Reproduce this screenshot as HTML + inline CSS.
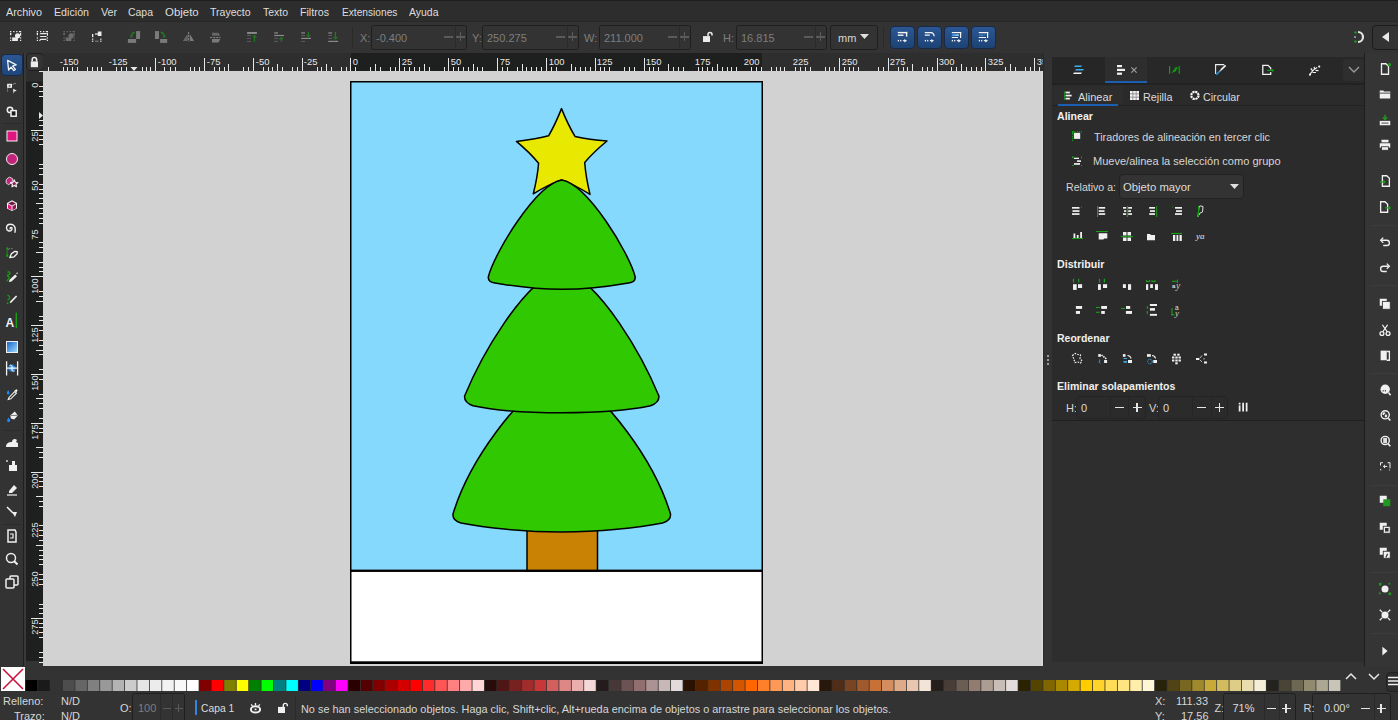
<!DOCTYPE html><html><head><meta charset="utf-8"><style>
html,body{margin:0;padding:0;}
body{width:1398px;height:720px;overflow:hidden;position:relative;background:#333333;font-family:"Liberation Sans",sans-serif;}
.b{position:absolute;}
.t{position:absolute;white-space:pre;line-height:1;font-family:"Liberation Sans",sans-serif;}
</style></head><body>
<div class="b" style="left:0px;top:0px;width:1398px;height:1px;background:#1e1e1e;"></div>
<div class="b" style="left:0px;top:1px;width:1398px;height:20px;background:#2d2d2d;"></div>
<div class="b" style="left:0px;top:21px;width:1398px;height:1px;background:#282828;"></div>
<div class="t" style="left:6.2px;top:6.59px;font-size:11px;color:#dedede;font-weight:normal;transform:scaleX(0.9814);transform-origin:0 0;">Archivo</div>
<div class="t" style="left:54.4px;top:6.59px;font-size:11px;color:#dedede;font-weight:normal;transform:scaleX(0.9701);transform-origin:0 0;">Edición</div>
<div class="t" style="left:101.1px;top:6.59px;font-size:11px;color:#dedede;font-weight:normal;transform:scaleX(0.9811);transform-origin:0 0;">Ver</div>
<div class="t" style="left:128px;top:6.59px;font-size:11px;color:#dedede;font-weight:normal;transform:scaleX(0.9507);transform-origin:0 0;">Capa</div>
<div class="t" style="left:165.2px;top:6.59px;font-size:11px;color:#dedede;font-weight:normal;transform:scaleX(1.0398);transform-origin:0 0;">Objeto</div>
<div class="t" style="left:210.2px;top:6.59px;font-size:11px;color:#dedede;font-weight:normal;transform:scaleX(0.9579);transform-origin:0 0;">Trayecto</div>
<div class="t" style="left:263px;top:6.59px;font-size:11px;color:#dedede;font-weight:normal;transform:scaleX(0.9509);transform-origin:0 0;">Texto</div>
<div class="t" style="left:300.2px;top:6.59px;font-size:11px;color:#dedede;font-weight:normal;transform:scaleX(0.9684);transform-origin:0 0;">Filtros</div>
<div class="t" style="left:341.7px;top:6.59px;font-size:11px;color:#dedede;font-weight:normal;transform:scaleX(0.9245);transform-origin:0 0;">Extensiones</div>
<div class="t" style="left:408.8px;top:6.59px;font-size:11px;color:#dedede;font-weight:normal;transform:scaleX(0.9518);transform-origin:0 0;">Ayuda</div>
<div class="b" style="left:352px;top:27px;width:1px;height:22px;background:#2a2a2a;"></div>
<div class="t" style="left:360px;top:32.69px;font-size:11px;color:#7e7e7e;font-weight:normal;">X:</div>
<div class="b" style="left:371px;top:25px;width:94px;height:23px;border:1px solid #1f1f1f;border-radius:2.5px;background:#333333"></div>
<div class="t" style="left:376px;top:32.69px;font-size:11px;color:#7e7e7e;font-weight:normal;">-0.400</div>
<div class="b" style="left:454.5px;top:26px;width:1px;height:23px;background:#2a2a2a;"></div>
<div class="b" style="left:444.0px;top:36.1px;width:9px;height:1.6px;background:#5a5a5a;"></div>
<div class="b" style="left:456.0px;top:36.1px;width:9px;height:1.6px;background:#5a5a5a;"></div>
<div class="b" style="left:459.8px;top:32.4px;width:1.4px;height:9px;background:#5a5a5a;"></div>
<div class="t" style="left:472px;top:32.69px;font-size:11px;color:#7e7e7e;font-weight:normal;">Y:</div>
<div class="b" style="left:482px;top:25px;width:95px;height:23px;border:1px solid #1f1f1f;border-radius:2.5px;background:#333333"></div>
<div class="t" style="left:487px;top:32.69px;font-size:11px;color:#7e7e7e;font-weight:normal;">250.275</div>
<div class="b" style="left:566.5px;top:26px;width:1px;height:23px;background:#2a2a2a;"></div>
<div class="b" style="left:556.0px;top:36.1px;width:9px;height:1.6px;background:#5a5a5a;"></div>
<div class="b" style="left:568.0px;top:36.1px;width:9px;height:1.6px;background:#5a5a5a;"></div>
<div class="b" style="left:571.8px;top:32.4px;width:1.4px;height:9px;background:#5a5a5a;"></div>
<div class="t" style="left:584px;top:32.69px;font-size:11px;color:#7e7e7e;font-weight:normal;">W:</div>
<div class="b" style="left:599px;top:25px;width:90px;height:23px;border:1px solid #1f1f1f;border-radius:2.5px;background:#333333"></div>
<div class="t" style="left:604px;top:32.69px;font-size:11px;color:#7e7e7e;font-weight:normal;">211.000</div>
<div class="b" style="left:678.5px;top:26px;width:1px;height:23px;background:#2a2a2a;"></div>
<div class="b" style="left:668.0px;top:36.1px;width:9px;height:1.6px;background:#5a5a5a;"></div>
<div class="b" style="left:680.0px;top:36.1px;width:9px;height:1.6px;background:#5a5a5a;"></div>
<div class="b" style="left:683.8px;top:32.4px;width:1.4px;height:9px;background:#5a5a5a;"></div>
<div class="t" style="left:723px;top:32.69px;font-size:11px;color:#7e7e7e;font-weight:normal;">H:</div>
<div class="b" style="left:736px;top:25px;width:89px;height:23px;border:1px solid #1f1f1f;border-radius:2.5px;background:#333333"></div>
<div class="t" style="left:741px;top:32.69px;font-size:11px;color:#7e7e7e;font-weight:normal;">16.815</div>
<div class="b" style="left:814.5px;top:26px;width:1px;height:23px;background:#2a2a2a;"></div>
<div class="b" style="left:804.0px;top:36.1px;width:9px;height:1.6px;background:#5a5a5a;"></div>
<div class="b" style="left:816.0px;top:36.1px;width:9px;height:1.6px;background:#5a5a5a;"></div>
<div class="b" style="left:819.8px;top:32.4px;width:1.4px;height:9px;background:#5a5a5a;"></div>
<div class="b" style="left:830px;top:25px;width:46px;height:23px;border:1px solid #1f1f1f;border-radius:2.5px;background:#333333"></div>
<div class="t" style="left:838px;top:32.69px;font-size:11px;color:#d6d6d6;font-weight:normal;">mm</div>
<svg class="b" style="left:860px;top:34px;" width="10" height="6" viewBox="0 0 10 6"><path d="M0 0h9L4.5 5z" fill="#e0e0e0"/></svg>
<div class="b" style="left:883px;top:27px;width:1px;height:22px;background:#2a2a2a;"></div>
<div class="b" style="left:890px;top:26px;width:23px;height:21px;border:1px solid #172a4a;border-radius:4px;background:linear-gradient(#2c5794,#1d4374)"></div>
<div class="b" style="left:917px;top:26px;width:23px;height:21px;border:1px solid #172a4a;border-radius:4px;background:linear-gradient(#2c5794,#1d4374)"></div>
<div class="b" style="left:944px;top:26px;width:23px;height:21px;border:1px solid #172a4a;border-radius:4px;background:linear-gradient(#2c5794,#1d4374)"></div>
<div class="b" style="left:971px;top:26px;width:23px;height:21px;border:1px solid #172a4a;border-radius:4px;background:linear-gradient(#2c5794,#1d4374)"></div>
<svg class="b" style="left:1350.0px;top:29.0px" width="16" height="16" viewBox="0 0 16 16"><path d="M8 3a5 5 0 0 1 0 10" stroke="#e6e6e6" stroke-width="2.2" fill="none"/><circle cx="5.5" cy="3.5" r="1.2" fill="#1f9a1f"/><circle cx="5.5" cy="12.5" r="1.2" fill="#1f9a1f"/><path d="M5 7v2" stroke="#e6e6e6" stroke-width="1"/></svg>
<div class="b" style="left:1372px;top:25px;width:30px;height:23px;border:1px solid #1c1c1c;border-radius:4px;background:#333"></div>
<svg class="b" style="left:1382px;top:32px;" width="8" height="10" viewBox="0 0 8 10"><path d="M7 0v10L0 5z" fill="#e8e8e8"/></svg>
<div class="b" style="left:0px;top:53px;width:23px;height:613px;background:#333333;"></div>
<div class="b" style="left:23px;top:53px;width:1px;height:613px;background:#1f1f1f;"></div>
<div class="b" style="left:24px;top:53px;width:2px;height:613px;background:#393939;"></div>
<div class="b" style="left:1px;top:54px;width:20px;height:20px;border:1px solid #172a4a;border-radius:4px;background:linear-gradient(#2c5794,#1f4679)"></div>
<div class="b" style="left:3px;top:123px;width:18px;height:1px;background:#2c2c2c;"></div>
<svg class="b" style="left:3.5px;top:127.5px" width="16" height="16" viewBox="0 0 16 16"><rect x="3" y="3" width="10" height="10" fill="#e0157f" stroke="#f0f0f0" stroke-width="1"/></svg>
<svg class="b" style="left:3.5px;top:151.0px" width="16" height="16" viewBox="0 0 16 16"><circle cx="8" cy="8" r="5.5" fill="#c2237a" stroke="#f0f0f0" stroke-width="1"/></svg>
<svg class="b" style="left:3.5px;top:339.0px" width="16" height="16" viewBox="0 0 16 16"><defs><linearGradient id="gg" x1="0" y1="0" x2="1" y2="1"><stop offset="0" stop-color="#0b63c7"/><stop offset="1" stop-color="#a9dcff"/></linearGradient></defs><rect x="2.5" y="2.5" width="11" height="11" fill="url(#gg)" stroke="#f0f0f0" stroke-width="1"/></svg>
<div class="b" style="left:3px;top:430px;width:18px;height:1px;background:#2c2c2c;"></div>
<svg class="b" style="left:3.5px;top:433.5px" width="16" height="16" viewBox="0 0 16 16"><path d="M2 13c0-4 3-5 6-5 0-3 3-4 5-2l-1 2 2 1v4z" fill="#f0f0f0"/></svg>
<svg class="b" style="left:3.5px;top:457.0px" width="16" height="16" viewBox="0 0 16 16"><rect x="5" y="8" width="8" height="6" fill="#f0f0f0"/><rect x="8" y="4" width="3" height="4" fill="#f0f0f0"/><path d="M2 3l2 2M4 3L2 5" stroke="#aaa" stroke-width="1"/></svg>
<svg class="b" style="left:3.5px;top:481.0px" width="16" height="16" viewBox="0 0 16 16"><path d="M5 10l5-6 3 3-5 5H5z" fill="#f0f0f0"/><path d="M3 14h10" stroke="#f0f0f0" stroke-width="1.2"/></svg>
<svg class="b" style="left:3.5px;top:503.5px" width="16" height="16" viewBox="0 0 16 16"><path d="M3 3l6 6" stroke="#f0f0f0" stroke-width="1.5"/><path d="M8 8l5 0-2 5z" fill="#f0f0f0"/></svg>
<div class="b" style="left:3px;top:524px;width:18px;height:1px;background:#2c2c2c;"></div>
<svg class="b" style="left:3.5px;top:527.5px" width="16" height="16" viewBox="0 0 16 16"><path d="M4 2h7l1 2v10H4z" stroke="#f0f0f0" stroke-width="1.5" fill="none"/><path d="M6 6h3v4H6" stroke="#f0f0f0" stroke-width="1.2" fill="none"/></svg>
<svg class="b" style="left:3.5px;top:551.0px" width="16" height="16" viewBox="0 0 16 16"><circle cx="7" cy="7" r="4.5" stroke="#f0f0f0" stroke-width="1.5" fill="none"/><path d="M10 10l3.5 3.5" stroke="#f0f0f0" stroke-width="2"/></svg>
<svg class="b" style="left:3.5px;top:574.0px" width="16" height="16" viewBox="0 0 16 16"><rect x="6" y="2" width="8" height="9" rx="1" stroke="#f0f0f0" stroke-width="1.5" fill="none"/><rect x="2" y="5" width="8" height="9" rx="1" stroke="#f0f0f0" stroke-width="1.5" fill="#333"/></svg>
<div class="b" style="left:26px;top:53px;width:17px;height:18px;background:#333333;"></div>
<div class="b" style="left:26px;top:53px;width:15.5px;height:15.5px;border:1px solid #1e1e1e;border-radius:4px;background:#333"></div>
<svg class="b" style="left:43px;top:53px;" width="1000" height="18" viewBox="0 0 1000 18"><rect x="0" y="0" width="1000" height="18" fill="#2e2e2e"/><rect x="308" y="0" width="411" height="18" fill="#1e1f1f"/><line x1="5.5" y1="14" x2="5.5" y2="18" stroke="#e8e8e8" stroke-width="1"/><line x1="20.5" y1="14" x2="20.5" y2="18" stroke="#e8e8e8" stroke-width="1"/><line x1="24.5" y1="14" x2="24.5" y2="18" stroke="#e8e8e8" stroke-width="1"/><line x1="29.5" y1="14" x2="29.5" y2="18" stroke="#e8e8e8" stroke-width="1"/><line x1="34.5" y1="14" x2="34.5" y2="18" stroke="#e8e8e8" stroke-width="1"/><line x1="44.5" y1="14" x2="44.5" y2="18" stroke="#e8e8e8" stroke-width="1"/><line x1="49.5" y1="14" x2="49.5" y2="18" stroke="#e8e8e8" stroke-width="1"/><line x1="54.5" y1="14" x2="54.5" y2="18" stroke="#e8e8e8" stroke-width="1"/><line x1="58.5" y1="14" x2="58.5" y2="18" stroke="#e8e8e8" stroke-width="1"/><line x1="73.5" y1="14" x2="73.5" y2="18" stroke="#e8e8e8" stroke-width="1"/><line x1="78.5" y1="14" x2="78.5" y2="18" stroke="#e8e8e8" stroke-width="1"/><line x1="83.5" y1="14" x2="83.5" y2="18" stroke="#e8e8e8" stroke-width="1"/><line x1="99.5" y1="14" x2="99.5" y2="18" stroke="#e8e8e8" stroke-width="1"/><line x1="103.5" y1="14" x2="103.5" y2="18" stroke="#e8e8e8" stroke-width="1"/><line x1="107.5" y1="14" x2="107.5" y2="18" stroke="#e8e8e8" stroke-width="1"/><line x1="112.5" y1="5" x2="112.5" y2="18" stroke="#e8e8e8" stroke-width="1"/><line x1="121.5" y1="14" x2="121.5" y2="18" stroke="#e8e8e8" stroke-width="1"/><line x1="127.5" y1="14" x2="127.5" y2="18" stroke="#e8e8e8" stroke-width="1"/><line x1="132.5" y1="14" x2="132.5" y2="18" stroke="#e8e8e8" stroke-width="1"/><line x1="147.5" y1="14" x2="147.5" y2="18" stroke="#e8e8e8" stroke-width="1"/><line x1="151.5" y1="14" x2="151.5" y2="18" stroke="#e8e8e8" stroke-width="1"/><line x1="156.5" y1="14" x2="156.5" y2="18" stroke="#e8e8e8" stroke-width="1"/><line x1="161.5" y1="5" x2="161.5" y2="18" stroke="#e8e8e8" stroke-width="1"/><line x1="171.5" y1="14" x2="171.5" y2="18" stroke="#e8e8e8" stroke-width="1"/><line x1="176.5" y1="14" x2="176.5" y2="18" stroke="#e8e8e8" stroke-width="1"/><line x1="181.5" y1="14" x2="181.5" y2="18" stroke="#e8e8e8" stroke-width="1"/><line x1="185.5" y1="11" x2="185.5" y2="18" stroke="#e8e8e8" stroke-width="1"/><line x1="200.5" y1="14" x2="200.5" y2="18" stroke="#e8e8e8" stroke-width="1"/><line x1="205.5" y1="14" x2="205.5" y2="18" stroke="#e8e8e8" stroke-width="1"/><line x1="210.5" y1="5" x2="210.5" y2="18" stroke="#e8e8e8" stroke-width="1"/><line x1="220.5" y1="14" x2="220.5" y2="18" stroke="#e8e8e8" stroke-width="1"/><line x1="225.5" y1="14" x2="225.5" y2="18" stroke="#e8e8e8" stroke-width="1"/><line x1="229.5" y1="14" x2="229.5" y2="18" stroke="#e8e8e8" stroke-width="1"/><line x1="234.5" y1="11" x2="234.5" y2="18" stroke="#e8e8e8" stroke-width="1"/><line x1="239.5" y1="14" x2="239.5" y2="18" stroke="#e8e8e8" stroke-width="1"/><line x1="249.5" y1="14" x2="249.5" y2="18" stroke="#e8e8e8" stroke-width="1"/><line x1="254.5" y1="14" x2="254.5" y2="18" stroke="#e8e8e8" stroke-width="1"/><line x1="259.5" y1="5" x2="259.5" y2="18" stroke="#e8e8e8" stroke-width="1"/><line x1="274.5" y1="14" x2="274.5" y2="18" stroke="#e8e8e8" stroke-width="1"/><line x1="278.5" y1="14" x2="278.5" y2="18" stroke="#e8e8e8" stroke-width="1"/><line x1="283.5" y1="11" x2="283.5" y2="18" stroke="#e8e8e8" stroke-width="1"/><line x1="288.5" y1="14" x2="288.5" y2="18" stroke="#e8e8e8" stroke-width="1"/><line x1="298.5" y1="14" x2="298.5" y2="18" stroke="#e8e8e8" stroke-width="1"/><line x1="303.5" y1="14" x2="303.5" y2="18" stroke="#e8e8e8" stroke-width="1"/><line x1="307.5" y1="5" x2="307.5" y2="18" stroke="#e8e8e8" stroke-width="1"/><line x1="312.5" y1="14" x2="312.5" y2="18" stroke="#e8e8e8" stroke-width="1"/><line x1="327.5" y1="14" x2="327.5" y2="18" stroke="#e8e8e8" stroke-width="1"/><line x1="332.5" y1="11" x2="332.5" y2="18" stroke="#e8e8e8" stroke-width="1"/><line x1="337.5" y1="14" x2="337.5" y2="18" stroke="#e8e8e8" stroke-width="1"/><line x1="347.5" y1="14" x2="347.5" y2="18" stroke="#e8e8e8" stroke-width="1"/><line x1="352.5" y1="14" x2="352.5" y2="18" stroke="#e8e8e8" stroke-width="1"/><line x1="356.5" y1="5" x2="356.5" y2="18" stroke="#e8e8e8" stroke-width="1"/><line x1="361.5" y1="14" x2="361.5" y2="18" stroke="#e8e8e8" stroke-width="1"/><line x1="366.5" y1="14" x2="366.5" y2="18" stroke="#e8e8e8" stroke-width="1"/><line x1="371.5" y1="14" x2="371.5" y2="18" stroke="#e8e8e8" stroke-width="1"/><line x1="376.5" y1="14" x2="376.5" y2="18" stroke="#e8e8e8" stroke-width="1"/><line x1="381.5" y1="11" x2="381.5" y2="18" stroke="#e8e8e8" stroke-width="1"/><line x1="386.5" y1="14" x2="386.5" y2="18" stroke="#e8e8e8" stroke-width="1"/><line x1="401.5" y1="14" x2="401.5" y2="18" stroke="#e8e8e8" stroke-width="1"/><line x1="405.5" y1="5" x2="405.5" y2="18" stroke="#e8e8e8" stroke-width="1"/><line x1="410.5" y1="14" x2="410.5" y2="18" stroke="#e8e8e8" stroke-width="1"/><line x1="415.5" y1="14" x2="415.5" y2="18" stroke="#e8e8e8" stroke-width="1"/><line x1="420.5" y1="14" x2="420.5" y2="18" stroke="#e8e8e8" stroke-width="1"/><line x1="425.5" y1="14" x2="425.5" y2="18" stroke="#e8e8e8" stroke-width="1"/><line x1="430.5" y1="11" x2="430.5" y2="18" stroke="#e8e8e8" stroke-width="1"/><line x1="434.5" y1="14" x2="434.5" y2="18" stroke="#e8e8e8" stroke-width="1"/><line x1="439.5" y1="14" x2="439.5" y2="18" stroke="#e8e8e8" stroke-width="1"/><line x1="454.5" y1="5" x2="454.5" y2="18" stroke="#e8e8e8" stroke-width="1"/><line x1="459.5" y1="14" x2="459.5" y2="18" stroke="#e8e8e8" stroke-width="1"/><line x1="464.5" y1="14" x2="464.5" y2="18" stroke="#e8e8e8" stroke-width="1"/><line x1="474.5" y1="14" x2="474.5" y2="18" stroke="#e8e8e8" stroke-width="1"/><line x1="479.5" y1="11" x2="479.5" y2="18" stroke="#e8e8e8" stroke-width="1"/><line x1="483.5" y1="14" x2="483.5" y2="18" stroke="#e8e8e8" stroke-width="1"/><line x1="488.5" y1="14" x2="488.5" y2="18" stroke="#e8e8e8" stroke-width="1"/><line x1="493.5" y1="14" x2="493.5" y2="18" stroke="#e8e8e8" stroke-width="1"/><line x1="498.5" y1="14" x2="498.5" y2="18" stroke="#e8e8e8" stroke-width="1"/><line x1="503.5" y1="5" x2="503.5" y2="18" stroke="#e8e8e8" stroke-width="1"/><line x1="508.5" y1="14" x2="508.5" y2="18" stroke="#e8e8e8" stroke-width="1"/><line x1="513.5" y1="14" x2="513.5" y2="18" stroke="#e8e8e8" stroke-width="1"/><line x1="528.5" y1="11" x2="528.5" y2="18" stroke="#e8e8e8" stroke-width="1"/><line x1="532.5" y1="14" x2="532.5" y2="18" stroke="#e8e8e8" stroke-width="1"/><line x1="537.5" y1="14" x2="537.5" y2="18" stroke="#e8e8e8" stroke-width="1"/><line x1="542.5" y1="14" x2="542.5" y2="18" stroke="#e8e8e8" stroke-width="1"/><line x1="547.5" y1="14" x2="547.5" y2="18" stroke="#e8e8e8" stroke-width="1"/><line x1="552.5" y1="5" x2="552.5" y2="18" stroke="#e8e8e8" stroke-width="1"/><line x1="557.5" y1="14" x2="557.5" y2="18" stroke="#e8e8e8" stroke-width="1"/><line x1="561.5" y1="14" x2="561.5" y2="18" stroke="#e8e8e8" stroke-width="1"/><line x1="566.5" y1="14" x2="566.5" y2="18" stroke="#e8e8e8" stroke-width="1"/><line x1="581.5" y1="14" x2="581.5" y2="18" stroke="#e8e8e8" stroke-width="1"/><line x1="586.5" y1="14" x2="586.5" y2="18" stroke="#e8e8e8" stroke-width="1"/><line x1="591.5" y1="14" x2="591.5" y2="18" stroke="#e8e8e8" stroke-width="1"/><line x1="601.5" y1="5" x2="601.5" y2="18" stroke="#e8e8e8" stroke-width="1"/><line x1="606.5" y1="14" x2="606.5" y2="18" stroke="#e8e8e8" stroke-width="1"/><line x1="610.5" y1="14" x2="610.5" y2="18" stroke="#e8e8e8" stroke-width="1"/><line x1="615.5" y1="14" x2="615.5" y2="18" stroke="#e8e8e8" stroke-width="1"/><line x1="625.5" y1="11" x2="625.5" y2="18" stroke="#e8e8e8" stroke-width="1"/><line x1="630.5" y1="14" x2="630.5" y2="18" stroke="#e8e8e8" stroke-width="1"/><line x1="635.5" y1="14" x2="635.5" y2="18" stroke="#e8e8e8" stroke-width="1"/><line x1="640.5" y1="14" x2="640.5" y2="18" stroke="#e8e8e8" stroke-width="1"/><line x1="655.5" y1="14" x2="655.5" y2="18" stroke="#e8e8e8" stroke-width="1"/><line x1="659.5" y1="14" x2="659.5" y2="18" stroke="#e8e8e8" stroke-width="1"/><line x1="664.5" y1="14" x2="664.5" y2="18" stroke="#e8e8e8" stroke-width="1"/><line x1="669.5" y1="14" x2="669.5" y2="18" stroke="#e8e8e8" stroke-width="1"/><line x1="674.5" y1="11" x2="674.5" y2="18" stroke="#e8e8e8" stroke-width="1"/><line x1="679.5" y1="14" x2="679.5" y2="18" stroke="#e8e8e8" stroke-width="1"/><line x1="684.5" y1="14" x2="684.5" y2="18" stroke="#e8e8e8" stroke-width="1"/><line x1="688.5" y1="14" x2="688.5" y2="18" stroke="#e8e8e8" stroke-width="1"/><line x1="693.5" y1="14" x2="693.5" y2="18" stroke="#e8e8e8" stroke-width="1"/><line x1="708.5" y1="14" x2="708.5" y2="18" stroke="#e8e8e8" stroke-width="1"/><line x1="713.5" y1="14" x2="713.5" y2="18" stroke="#e8e8e8" stroke-width="1"/><line x1="718.5" y1="14" x2="718.5" y2="18" stroke="#e8e8e8" stroke-width="1"/><line x1="728.5" y1="14" x2="728.5" y2="18" stroke="#e8e8e8" stroke-width="1"/><line x1="733.5" y1="14" x2="733.5" y2="18" stroke="#e8e8e8" stroke-width="1"/><line x1="737.5" y1="14" x2="737.5" y2="18" stroke="#e8e8e8" stroke-width="1"/><line x1="741.5" y1="14" x2="741.5" y2="18" stroke="#e8e8e8" stroke-width="1"/><line x1="752.5" y1="14" x2="752.5" y2="18" stroke="#e8e8e8" stroke-width="1"/><line x1="757.5" y1="14" x2="757.5" y2="18" stroke="#e8e8e8" stroke-width="1"/><line x1="762.5" y1="14" x2="762.5" y2="18" stroke="#e8e8e8" stroke-width="1"/><line x1="767.5" y1="14" x2="767.5" y2="18" stroke="#e8e8e8" stroke-width="1"/><line x1="782.5" y1="14" x2="782.5" y2="18" stroke="#e8e8e8" stroke-width="1"/><line x1="786.5" y1="14" x2="786.5" y2="18" stroke="#e8e8e8" stroke-width="1"/><line x1="791.5" y1="14" x2="791.5" y2="18" stroke="#e8e8e8" stroke-width="1"/><line x1="796.5" y1="5" x2="796.5" y2="18" stroke="#e8e8e8" stroke-width="1"/><line x1="801.5" y1="14" x2="801.5" y2="18" stroke="#e8e8e8" stroke-width="1"/><line x1="806.5" y1="14" x2="806.5" y2="18" stroke="#e8e8e8" stroke-width="1"/><line x1="810.5" y1="14" x2="810.5" y2="18" stroke="#e8e8e8" stroke-width="1"/><line x1="815.5" y1="14" x2="815.5" y2="18" stroke="#e8e8e8" stroke-width="1"/><line x1="835.5" y1="14" x2="835.5" y2="18" stroke="#e8e8e8" stroke-width="1"/><line x1="840.5" y1="14" x2="840.5" y2="18" stroke="#e8e8e8" stroke-width="1"/><line x1="845.5" y1="5" x2="845.5" y2="18" stroke="#e8e8e8" stroke-width="1"/><line x1="855.5" y1="14" x2="855.5" y2="18" stroke="#e8e8e8" stroke-width="1"/><line x1="860.5" y1="14" x2="860.5" y2="18" stroke="#e8e8e8" stroke-width="1"/><line x1="864.5" y1="14" x2="864.5" y2="18" stroke="#e8e8e8" stroke-width="1"/><line x1="869.5" y1="11" x2="869.5" y2="18" stroke="#e8e8e8" stroke-width="1"/><line x1="879.5" y1="14" x2="879.5" y2="18" stroke="#e8e8e8" stroke-width="1"/><line x1="884.5" y1="14" x2="884.5" y2="18" stroke="#e8e8e8" stroke-width="1"/><line x1="889.5" y1="14" x2="889.5" y2="18" stroke="#e8e8e8" stroke-width="1"/><line x1="894.5" y1="5" x2="894.5" y2="18" stroke="#e8e8e8" stroke-width="1"/><line x1="908.5" y1="14" x2="908.5" y2="18" stroke="#e8e8e8" stroke-width="1"/><line x1="913.5" y1="14" x2="913.5" y2="18" stroke="#e8e8e8" stroke-width="1"/><line x1="918.5" y1="11" x2="918.5" y2="18" stroke="#e8e8e8" stroke-width="1"/><line x1="923.5" y1="14" x2="923.5" y2="18" stroke="#e8e8e8" stroke-width="1"/><line x1="928.5" y1="14" x2="928.5" y2="18" stroke="#e8e8e8" stroke-width="1"/><line x1="933.5" y1="14" x2="933.5" y2="18" stroke="#e8e8e8" stroke-width="1"/><line x1="938.5" y1="14" x2="938.5" y2="18" stroke="#e8e8e8" stroke-width="1"/><line x1="942.5" y1="5" x2="942.5" y2="18" stroke="#e8e8e8" stroke-width="1"/><line x1="962.5" y1="14" x2="962.5" y2="18" stroke="#e8e8e8" stroke-width="1"/><line x1="967.5" y1="11" x2="967.5" y2="18" stroke="#e8e8e8" stroke-width="1"/><line x1="972.5" y1="14" x2="972.5" y2="18" stroke="#e8e8e8" stroke-width="1"/><line x1="982.5" y1="14" x2="982.5" y2="18" stroke="#e8e8e8" stroke-width="1"/><line x1="987.5" y1="14" x2="987.5" y2="18" stroke="#e8e8e8" stroke-width="1"/><line x1="991.5" y1="5" x2="991.5" y2="18" stroke="#e8e8e8" stroke-width="1"/><line x1="996.5" y1="14" x2="996.5" y2="18" stroke="#e8e8e8" stroke-width="1"/><text x="16.8" y="12.1" font-size="9.4" fill="#e8e8e8" font-family="Liberation Sans">-150</text><text x="65.8" y="12.1" font-size="9.4" fill="#e8e8e8" font-family="Liberation Sans">-125</text><text x="114.8" y="12.1" font-size="9.4" fill="#e8e8e8" font-family="Liberation Sans">-100</text><text x="163.8" y="12.1" font-size="9.4" fill="#e8e8e8" font-family="Liberation Sans">-75</text><text x="212.8" y="12.1" font-size="9.4" fill="#e8e8e8" font-family="Liberation Sans">-50</text><text x="260.8" y="12.1" font-size="9.4" fill="#e8e8e8" font-family="Liberation Sans">-25</text><text x="309.8" y="12.1" font-size="9.4" fill="#e8e8e8" font-family="Liberation Sans">0</text><text x="358.8" y="12.1" font-size="9.4" fill="#e8e8e8" font-family="Liberation Sans">25</text><text x="407.8" y="12.1" font-size="9.4" fill="#e8e8e8" font-family="Liberation Sans">50</text><text x="456.8" y="12.1" font-size="9.4" fill="#e8e8e8" font-family="Liberation Sans">75</text><text x="505.8" y="12.1" font-size="9.4" fill="#e8e8e8" font-family="Liberation Sans">100</text><text x="553.8" y="12.1" font-size="9.4" fill="#e8e8e8" font-family="Liberation Sans">125</text><text x="602.8" y="12.1" font-size="9.4" fill="#e8e8e8" font-family="Liberation Sans">150</text><text x="651.8" y="12.1" font-size="9.4" fill="#e8e8e8" font-family="Liberation Sans">175</text><text x="700.8" y="12.1" font-size="9.4" fill="#e8e8e8" font-family="Liberation Sans">200</text><text x="749.8" y="12.1" font-size="9.4" fill="#e8e8e8" font-family="Liberation Sans">225</text><text x="798.8" y="12.1" font-size="9.4" fill="#e8e8e8" font-family="Liberation Sans">250</text><text x="846.8" y="12.1" font-size="9.4" fill="#e8e8e8" font-family="Liberation Sans">275</text><text x="895.8" y="12.1" font-size="9.4" fill="#e8e8e8" font-family="Liberation Sans">300</text><text x="944.8" y="12.1" font-size="9.4" fill="#e8e8e8" font-family="Liberation Sans">325</text><text x="993.8" y="12.1" font-size="9.4" fill="#e8e8e8" font-family="Liberation Sans">350</text><path d="M87.5 14h7l-3.5 4z" fill="#e8e8e8"/></svg>
<svg class="b" style="left:26px;top:71px;" width="17" height="595" viewBox="0 0 17 595"><rect x="0" y="0" width="17" height="595" fill="#2e2e2e"/><rect x="0" y="10.5" width="17" height="579.5" fill="#1e1f1f"/><rect x="0" y="590" width="17" height="5" fill="#333333"/><line x1="13" y1="15.5" x2="17" y2="15.5" stroke="#e8e8e8" stroke-width="1"/><line x1="13" y1="20.5" x2="17" y2="20.5" stroke="#e8e8e8" stroke-width="1"/><line x1="13" y1="25.5" x2="17" y2="25.5" stroke="#e8e8e8" stroke-width="1"/><line x1="13" y1="49.5" x2="17" y2="49.5" stroke="#e8e8e8" stroke-width="1"/><line x1="13" y1="54.5" x2="17" y2="54.5" stroke="#e8e8e8" stroke-width="1"/><line x1="5" y1="59.5" x2="17" y2="59.5" stroke="#e8e8e8" stroke-width="1"/><line x1="13" y1="64.5" x2="17" y2="64.5" stroke="#e8e8e8" stroke-width="1"/><line x1="13" y1="68.5" x2="17" y2="68.5" stroke="#e8e8e8" stroke-width="1"/><line x1="13" y1="73.5" x2="17" y2="73.5" stroke="#e8e8e8" stroke-width="1"/><line x1="13" y1="93.5" x2="17" y2="93.5" stroke="#e8e8e8" stroke-width="1"/><line x1="13" y1="97.5" x2="17" y2="97.5" stroke="#e8e8e8" stroke-width="1"/><line x1="13" y1="103.5" x2="17" y2="103.5" stroke="#e8e8e8" stroke-width="1"/><line x1="13" y1="113.5" x2="17" y2="113.5" stroke="#e8e8e8" stroke-width="1"/><line x1="13" y1="118.5" x2="17" y2="118.5" stroke="#e8e8e8" stroke-width="1"/><line x1="13" y1="122.5" x2="17" y2="122.5" stroke="#e8e8e8" stroke-width="1"/><line x1="13" y1="127.5" x2="17" y2="127.5" stroke="#e8e8e8" stroke-width="1"/><line x1="10" y1="132.5" x2="17" y2="132.5" stroke="#e8e8e8" stroke-width="1"/><line x1="13" y1="137.5" x2="17" y2="137.5" stroke="#e8e8e8" stroke-width="1"/><line x1="13" y1="142.5" x2="17" y2="142.5" stroke="#e8e8e8" stroke-width="1"/><line x1="13" y1="147.5" x2="17" y2="147.5" stroke="#e8e8e8" stroke-width="1"/><line x1="13" y1="152.5" x2="17" y2="152.5" stroke="#e8e8e8" stroke-width="1"/><line x1="13" y1="171.5" x2="17" y2="171.5" stroke="#e8e8e8" stroke-width="1"/><line x1="13" y1="176.5" x2="17" y2="176.5" stroke="#e8e8e8" stroke-width="1"/><line x1="10" y1="181.5" x2="17" y2="181.5" stroke="#e8e8e8" stroke-width="1"/><line x1="13" y1="191.5" x2="17" y2="191.5" stroke="#e8e8e8" stroke-width="1"/><line x1="13" y1="196.5" x2="17" y2="196.5" stroke="#e8e8e8" stroke-width="1"/><line x1="13" y1="200.5" x2="17" y2="200.5" stroke="#e8e8e8" stroke-width="1"/><line x1="5" y1="205.5" x2="17" y2="205.5" stroke="#e8e8e8" stroke-width="1"/><line x1="13" y1="220.5" x2="17" y2="220.5" stroke="#e8e8e8" stroke-width="1"/><line x1="13" y1="225.5" x2="17" y2="225.5" stroke="#e8e8e8" stroke-width="1"/><line x1="10" y1="230.5" x2="17" y2="230.5" stroke="#e8e8e8" stroke-width="1"/><line x1="13" y1="245.5" x2="17" y2="245.5" stroke="#e8e8e8" stroke-width="1"/><line x1="13" y1="249.5" x2="17" y2="249.5" stroke="#e8e8e8" stroke-width="1"/><line x1="5" y1="254.5" x2="17" y2="254.5" stroke="#e8e8e8" stroke-width="1"/><line x1="13" y1="259.5" x2="17" y2="259.5" stroke="#e8e8e8" stroke-width="1"/><line x1="13" y1="269.5" x2="17" y2="269.5" stroke="#e8e8e8" stroke-width="1"/><line x1="13" y1="274.5" x2="17" y2="274.5" stroke="#e8e8e8" stroke-width="1"/><line x1="10" y1="279.5" x2="17" y2="279.5" stroke="#e8e8e8" stroke-width="1"/><line x1="13" y1="283.5" x2="17" y2="283.5" stroke="#e8e8e8" stroke-width="1"/><line x1="13" y1="298.5" x2="17" y2="298.5" stroke="#e8e8e8" stroke-width="1"/><line x1="5" y1="303.5" x2="17" y2="303.5" stroke="#e8e8e8" stroke-width="1"/><line x1="13" y1="308.5" x2="17" y2="308.5" stroke="#e8e8e8" stroke-width="1"/><line x1="13" y1="323.5" x2="17" y2="323.5" stroke="#e8e8e8" stroke-width="1"/><line x1="10" y1="327.5" x2="17" y2="327.5" stroke="#e8e8e8" stroke-width="1"/><line x1="13" y1="332.5" x2="17" y2="332.5" stroke="#e8e8e8" stroke-width="1"/><line x1="13" y1="337.5" x2="17" y2="337.5" stroke="#e8e8e8" stroke-width="1"/><line x1="13" y1="347.5" x2="17" y2="347.5" stroke="#e8e8e8" stroke-width="1"/><line x1="5" y1="352.5" x2="17" y2="352.5" stroke="#e8e8e8" stroke-width="1"/><line x1="13" y1="357.5" x2="17" y2="357.5" stroke="#e8e8e8" stroke-width="1"/><line x1="13" y1="361.5" x2="17" y2="361.5" stroke="#e8e8e8" stroke-width="1"/><line x1="10" y1="376.5" x2="17" y2="376.5" stroke="#e8e8e8" stroke-width="1"/><line x1="13" y1="381.5" x2="17" y2="381.5" stroke="#e8e8e8" stroke-width="1"/><line x1="13" y1="386.5" x2="17" y2="386.5" stroke="#e8e8e8" stroke-width="1"/><line x1="5" y1="401.5" x2="17" y2="401.5" stroke="#e8e8e8" stroke-width="1"/><line x1="13" y1="406.5" x2="17" y2="406.5" stroke="#e8e8e8" stroke-width="1"/><line x1="13" y1="410.5" x2="17" y2="410.5" stroke="#e8e8e8" stroke-width="1"/><line x1="13" y1="415.5" x2="17" y2="415.5" stroke="#e8e8e8" stroke-width="1"/><line x1="10" y1="425.5" x2="17" y2="425.5" stroke="#e8e8e8" stroke-width="1"/><line x1="13" y1="430.5" x2="17" y2="430.5" stroke="#e8e8e8" stroke-width="1"/><line x1="13" y1="435.5" x2="17" y2="435.5" stroke="#e8e8e8" stroke-width="1"/><line x1="13" y1="454.5" x2="17" y2="454.5" stroke="#e8e8e8" stroke-width="1"/><line x1="13" y1="459.5" x2="17" y2="459.5" stroke="#e8e8e8" stroke-width="1"/><line x1="13" y1="464.5" x2="17" y2="464.5" stroke="#e8e8e8" stroke-width="1"/><line x1="13" y1="469.5" x2="17" y2="469.5" stroke="#e8e8e8" stroke-width="1"/><line x1="10" y1="474.5" x2="17" y2="474.5" stroke="#e8e8e8" stroke-width="1"/><line x1="13" y1="479.5" x2="17" y2="479.5" stroke="#e8e8e8" stroke-width="1"/><line x1="13" y1="484.5" x2="17" y2="484.5" stroke="#e8e8e8" stroke-width="1"/><line x1="13" y1="488.5" x2="17" y2="488.5" stroke="#e8e8e8" stroke-width="1"/><line x1="13" y1="493.5" x2="17" y2="493.5" stroke="#e8e8e8" stroke-width="1"/><line x1="13" y1="503.5" x2="17" y2="503.5" stroke="#e8e8e8" stroke-width="1"/><line x1="13" y1="508.5" x2="17" y2="508.5" stroke="#e8e8e8" stroke-width="1"/><line x1="13" y1="513.5" x2="17" y2="513.5" stroke="#e8e8e8" stroke-width="1"/><line x1="13" y1="533.5" x2="17" y2="533.5" stroke="#e8e8e8" stroke-width="1"/><line x1="13" y1="537.5" x2="17" y2="537.5" stroke="#e8e8e8" stroke-width="1"/><line x1="13" y1="542.5" x2="17" y2="542.5" stroke="#e8e8e8" stroke-width="1"/><line x1="5" y1="547.5" x2="17" y2="547.5" stroke="#e8e8e8" stroke-width="1"/><line x1="13" y1="552.5" x2="17" y2="552.5" stroke="#e8e8e8" stroke-width="1"/><line x1="13" y1="556.5" x2="17" y2="556.5" stroke="#e8e8e8" stroke-width="1"/><line x1="13" y1="561.5" x2="17" y2="561.5" stroke="#e8e8e8" stroke-width="1"/><line x1="13" y1="566.5" x2="17" y2="566.5" stroke="#e8e8e8" stroke-width="1"/><line x1="13" y1="581.5" x2="17" y2="581.5" stroke="#e8e8e8" stroke-width="1"/><line x1="13" y1="586.5" x2="17" y2="586.5" stroke="#e8e8e8" stroke-width="1"/><line x1="13" y1="591.5" x2="17" y2="591.5" stroke="#e8e8e8" stroke-width="1"/><text transform="translate(11.8,11.5) rotate(-90)" text-anchor="end" font-size="9.2" fill="#e8e8e8" font-family="Liberation Sans">0</text><text transform="translate(11.8,60.5) rotate(-90)" text-anchor="end" font-size="9.2" fill="#e8e8e8" font-family="Liberation Sans">25</text><text transform="translate(11.8,109.5) rotate(-90)" text-anchor="end" font-size="9.2" fill="#e8e8e8" font-family="Liberation Sans">50</text><text transform="translate(11.8,158.5) rotate(-90)" text-anchor="end" font-size="9.2" fill="#e8e8e8" font-family="Liberation Sans">75</text><text transform="translate(11.8,207.5) rotate(-90)" text-anchor="end" font-size="9.2" fill="#e8e8e8" font-family="Liberation Sans">100</text><text transform="translate(11.8,256.5) rotate(-90)" text-anchor="end" font-size="9.2" fill="#e8e8e8" font-family="Liberation Sans">125</text><text transform="translate(11.8,304.5) rotate(-90)" text-anchor="end" font-size="9.2" fill="#e8e8e8" font-family="Liberation Sans">150</text><text transform="translate(11.8,353.5) rotate(-90)" text-anchor="end" font-size="9.2" fill="#e8e8e8" font-family="Liberation Sans">175</text><text transform="translate(11.8,402.5) rotate(-90)" text-anchor="end" font-size="9.2" fill="#e8e8e8" font-family="Liberation Sans">200</text><text transform="translate(11.8,451.5) rotate(-90)" text-anchor="end" font-size="9.2" fill="#e8e8e8" font-family="Liberation Sans">225</text><text transform="translate(11.8,500.5) rotate(-90)" text-anchor="end" font-size="9.2" fill="#e8e8e8" font-family="Liberation Sans">250</text><text transform="translate(11.8,548.5) rotate(-90)" text-anchor="end" font-size="9.2" fill="#e8e8e8" font-family="Liberation Sans">275</text><path d="M13 41v7l4-3.5z" fill="#e8e8e8"/><line x1="13" y1="0.5" x2="17" y2="0.5" stroke="#e8e8e8" stroke-width="1"/></svg>
<div class="b" style="left:43px;top:71px;width:1000px;height:595px;background:#d2d2d2;"></div>
<svg class="b" style="left:350px;top:81px;" width="413" height="583" viewBox="0 0 413 583"><rect x="0" y="0" width="413" height="583" fill="#ffffff"/><rect x="0.75" y="0.75" width="411.5" height="490" fill="#84d9fc" stroke="#000" stroke-width="1.5"/><rect x="0.75" y="490" width="411.5" height="91.25" fill="#fff" stroke="#000" stroke-width="1.5"/><rect x="177" y="439" width="70.5" height="51" fill="#c98204" stroke="#000" stroke-width="1.5"/><path d="M211.5 27.6 Q217.8 43.3 225.0 55.4 Q239.2 58.5 257.0 60.0 Q243.8 70.8 234.7 81.5 Q235.8 95.9 240.0 113.4 Q224.9 104.0 211.5 98.9 Q198.2 103.7 183.3 112.8 Q187.5 95.9 188.6 82.2 Q179.5 71.3 166.4 60.4 Q184.2 58.4 198.6 54.8 Q205.4 43.0 211.5 27.6Z" fill="#e8e800" stroke="#000" stroke-width="1.5" stroke-linejoin="round"/><rect x="0" y="488.6" width="413" height="2.2" fill="#000"/><rect x="0" y="580.6" width="413" height="2.4" fill="#000"/><path d="M211.8 287.0 C166.0 315.9 118.9 380.1 103.0 433.0 Q102.3 439.5 111.0 442.0 C135.0 446.8 175.0 451.0 211.8 451.0 C248.5 451.0 288.5 446.8 312.5 442.0 Q321.2 439.5 320.5 433.0 C304.6 380.1 257.5 315.9 211.8 287.0Z" fill="#30c800" stroke="#000" stroke-width="1.5" stroke-linejoin="round"/><path d="M211.8 187.0 C171.3 202.6 130.6 276.3 114.6 315.0 Q114.0 321.5 123.0 324.8 C145.0 329.5 180.0 331.8 211.8 331.8 C243.5 331.8 278.5 329.5 300.5 324.8 Q309.5 321.5 308.9 315.0 C292.9 276.3 252.2 202.6 211.8 187.0Z" fill="#30c800" stroke="#000" stroke-width="1.5" stroke-linejoin="round"/><path d="M211.8 99.0 C185.9 103.3 144.1 172.4 138.3 196.0 Q138.0 201.0 145.0 202.0 C165.0 205.5 190.0 208.3 211.8 208.3 C233.5 208.3 258.5 205.5 278.5 202.0 Q285.5 201.0 285.2 196.0 C279.5 172.4 237.6 103.3 211.8 99.0Z" fill="#30c800" stroke="#000" stroke-width="1.5" stroke-linejoin="round"/></svg>
<div class="b" style="left:1042px;top:71px;width:1px;height:595px;background:#dcdcdc;"></div>
<div class="b" style="left:1043px;top:53px;width:1px;height:613px;background:#2a2a2a;"></div>
<div class="b" style="left:1044px;top:53px;width:8px;height:613px;background:#333333;"></div>
<div class="b" style="left:1052px;top:57px;width:312px;height:26px;background:#282828;"></div>
<div class="b" style="left:1052px;top:57px;width:53px;height:26px;background:#262626;"></div>
<div class="b" style="left:1105px;top:57px;width:42px;height:26px;background:#2e2e2e;"></div>
<div class="b" style="left:1105px;top:81px;width:42px;height:3px;background:#1c5fb0;"></div>
<div class="b" style="left:1052px;top:83px;width:312px;height:2px;background:#222222;"></div>
<svg class="b" style="left:1070.0px;top:62.0px" width="16" height="16" viewBox="0 0 16 16"><path d="M4 5h7l1-1.5H5z M5 8.5h8l1-1.5H6z" fill="#3daee9"/><path d="M3 12h8l1-1.5H4z" fill="#f0f0f0"/></svg>
<svg class="b" style="left:1113.0px;top:62.0px" width="16" height="16" viewBox="0 0 16 16"><rect x="4" y="3" width="5" height="2.2" fill="#f0f0f0"/><rect x="4" y="6.8" width="8" height="2.2" fill="#f0f0f0"/><rect x="4" y="10.6" width="5" height="2.2" fill="#f0f0f0"/></svg>
<svg class="b" style="left:1127.0px;top:63.0px" width="14" height="14" viewBox="0 0 16 16"><path d="M5 5l6 6M11 5l-6 6" stroke="#a0a0a0" stroke-width="1.3"/></svg>
<div class="b" style="left:1343px;top:59px;width:22px;height:22px;border-radius:4px;background:#2e2e2e"></div>
<svg class="b" style="left:1348px;top:66px;" width="12" height="8" viewBox="0 0 12 8"><path d="M1 1l5 5 5-5" stroke="#9a9a9a" stroke-width="1.4" fill="none"/></svg>
<div class="b" style="left:1052px;top:85px;width:312px;height:335px;background:#2b2b2b;"></div>
<div class="b" style="left:1052px;top:420px;width:312px;height:1px;background:#202020;"></div>
<div class="b" style="left:1052px;top:421px;width:312px;height:241px;background:#2e2e2e;"></div>
<div class="b" style="left:1053px;top:86px;width:70px;height:19px;background:#2d2d2d;"></div>
<div class="b" style="left:1123px;top:86px;width:55px;height:19px;background:#2a2a2a;"></div>
<div class="b" style="left:1052px;top:105px;width:312px;height:1px;background:#222222;"></div>
<div class="b" style="left:1058px;top:104px;width:60px;height:2px;background:#1c5fb0;"></div>
<svg class="b" style="left:1062.0px;top:89.0px" width="14" height="14" viewBox="0 0 16 16"><rect x="4" y="3" width="5" height="2" fill="#f0f0f0"/><rect x="4" y="6.5" width="7" height="2" fill="#f0f0f0"/><rect x="4" y="10" width="5" height="2" fill="#f0f0f0"/><rect x="2.5" y="2.5" width="1" height="10" fill="#1f9a1f"/></svg>
<div class="t" style="left:1077.9px;top:91.69px;font-size:11px;color:#dcdcdc;font-weight:normal;transform:scaleX(1.0017);transform-origin:0 0;">Alinear</div>
<div class="t" style="left:1143px;top:91.69px;font-size:11px;color:#dcdcdc;font-weight:normal;transform:scaleX(0.9814);transform-origin:0 0;">Rejilla</div>
<div class="t" style="left:1203.3px;top:91.69px;font-size:11px;color:#dcdcdc;font-weight:normal;transform:scaleX(0.9737);transform-origin:0 0;">Circular</div>
<div class="t" style="left:1056.6px;top:110.69px;font-size:11px;color:#f0f0f0;font-weight:bold;transform:scaleX(0.9627);transform-origin:0 0;">Alinear</div>
<div class="t" style="left:1093.8px;top:131.69px;font-size:11px;color:#d6d6d6;font-weight:normal;transform:scaleX(0.9813);transform-origin:0 0;">Tiradores de alineación en tercer clic</div>
<div class="t" style="left:1092.5px;top:156.49px;font-size:11px;color:#d6d6d6;font-weight:normal;transform:scaleX(1.0026);transform-origin:0 0;">Mueve/alinea la selección como grupo</div>
<div class="t" style="left:1065.6px;top:182.09px;font-size:11px;color:#d6d6d6;font-weight:normal;transform:scaleX(0.9621);transform-origin:0 0;">Relativo a:</div>
<div class="b" style="left:1119px;top:174px;width:123px;height:23px;border:1px solid #222;border-radius:4px;background:#333"></div>
<div class="t" style="left:1123.2px;top:182.09px;font-size:11px;color:#dcdcdc;font-weight:normal;transform:scaleX(1.0268);transform-origin:0 0;">Objeto mayor</div>
<svg class="b" style="left:1230px;top:184px;" width="10" height="6" viewBox="0 0 10 6"><path d="M0 0h9L4.5 5z" fill="#e0e0e0"/></svg>
<div class="t" style="left:1056.6px;top:259.09px;font-size:11px;color:#f0f0f0;font-weight:bold;transform:scaleX(0.9695);transform-origin:0 0;">Distribuir</div>
<div class="t" style="left:1056.6px;top:332.89px;font-size:11px;color:#f0f0f0;font-weight:bold;transform:scaleX(0.9542);transform-origin:0 0;">Reordenar</div>
<div class="t" style="left:1056.6px;top:381.49px;font-size:11px;color:#f0f0f0;font-weight:bold;transform:scaleX(0.9588);transform-origin:0 0;">Eliminar solapamientos</div>
<div class="t" style="left:1066px;top:402.69px;font-size:11px;color:#d6d6d6;font-weight:normal;">H:</div>
<div class="b" style="left:1076px;top:396px;width:67.5px;height:21px;border:1px solid #242424;border-radius:4px;background:#2b2b2b"></div>
<div class="t" style="left:1081px;top:402.69px;font-size:11px;color:#dcdcdc;font-weight:normal;">0</div>
<div class="b" style="left:1109.5px;top:397px;width:1px;height:21px;background:#262626;"></div>
<div class="b" style="left:1128.0px;top:397px;width:1px;height:21px;background:#262626;"></div>
<div class="b" style="left:1114.5px;top:406.8px;width:9px;height:1.5px;background:#e6e6e6;"></div>
<div class="b" style="left:1132.5px;top:406.8px;width:9px;height:1.5px;background:#e6e6e6;"></div>
<div class="b" style="left:1136.25px;top:403.0px;width:1.5px;height:9px;background:#e6e6e6;"></div>
<div class="t" style="left:1149px;top:402.69px;font-size:11px;color:#d6d6d6;font-weight:normal;">V:</div>
<div class="b" style="left:1158px;top:396px;width:68px;height:21px;border:1px solid #242424;border-radius:4px;background:#2b2b2b"></div>
<div class="t" style="left:1163px;top:402.69px;font-size:11px;color:#dcdcdc;font-weight:normal;">0</div>
<div class="b" style="left:1192px;top:397px;width:1px;height:21px;background:#262626;"></div>
<div class="b" style="left:1210.5px;top:397px;width:1px;height:21px;background:#262626;"></div>
<div class="b" style="left:1197.0px;top:406.8px;width:9px;height:1.5px;background:#e6e6e6;"></div>
<div class="b" style="left:1215.0px;top:406.8px;width:9px;height:1.5px;background:#e6e6e6;"></div>
<div class="b" style="left:1218.75px;top:403.0px;width:1.5px;height:9px;background:#e6e6e6;"></div>
<svg class="b" style="left:1237.0px;top:401.0px" width="14" height="14" viewBox="0 0 16 16"><rect x="2" y="5" width="2" height="7" fill="#f0f0f0"/><rect x="2" y="2" width="2" height="2" fill="#f0f0f0"/><rect x="6" y="2" width="2" height="10" fill="#f0f0f0"/><rect x="10" y="2" width="2" height="10" fill="#f0f0f0"/></svg>
<div class="b" style="left:1047px;top:355px;width:2px;height:2px;background:#9a9a9a;"></div>
<div class="b" style="left:1047px;top:359px;width:2px;height:2px;background:#9a9a9a;"></div>
<div class="b" style="left:1047px;top:363px;width:2px;height:2px;background:#9a9a9a;"></div>
<div class="b" style="left:1364px;top:53px;width:1px;height:613px;background:#1e1e1e;"></div>
<div class="b" style="left:1365px;top:53px;width:33px;height:613px;background:#353535;"></div>
<div class="b" style="left:1370px;top:224.5px;width:26px;height:1px;background:#3c3c3c;"></div>
<div class="b" style="left:1370px;top:285px;width:26px;height:1px;background:#3c3c3c;"></div>
<div class="b" style="left:1370px;top:373px;width:26px;height:1px;background:#3c3c3c;"></div>
<div class="b" style="left:1370px;top:484.5px;width:26px;height:1px;background:#3c3c3c;"></div>
<div class="b" style="left:1370px;top:572px;width:26px;height:1px;background:#3c3c3c;"></div>
<div class="b" style="left:1370px;top:632.5px;width:26px;height:1px;background:#3c3c3c;"></div>
<svg class="b" style="left:1378.0px;top:62.0px" width="14" height="14" viewBox="0 0 16 16"><path d="M4 2h5l3 3v9H4z" stroke="#f0f0f0" stroke-width="1.5" fill="none"/><circle cx="13" cy="3" r="2" fill="#1f9a1f"/></svg>
<svg class="b" style="left:1378.0px;top:87.0px" width="14" height="14" viewBox="0 0 16 16"><path d="M2 4h4l1 1h7v8H2z" fill="#f0f0f0"/><path d="M2 7h12" stroke="#333" stroke-width="1"/></svg>
<svg class="b" style="left:1378.0px;top:112.5px" width="14" height="14" viewBox="0 0 16 16"><rect x="2" y="9" width="12" height="5" fill="#f0f0f0"/><path d="M8 2v5M5.5 5L8 7.5 10.5 5" stroke="#1f9a1f" stroke-width="1.6" fill="none"/><rect x="4" y="11" width="8" height="1" fill="#333"/></svg>
<svg class="b" style="left:1378.0px;top:138.0px" width="14" height="14" viewBox="0 0 16 16"><rect x="4" y="2" width="8" height="3" fill="#f0f0f0"/><rect x="2" y="6" width="12" height="5" fill="#f0f0f0"/><rect x="4" y="10" width="8" height="4" fill="#f0f0f0" stroke="#333" stroke-width="1"/></svg>
<svg class="b" style="left:1378.0px;top:174.0px" width="14" height="14" viewBox="0 0 16 16"><path d="M5 2h5l3 3v9H5z" stroke="#f0f0f0" stroke-width="1.5" fill="none"/><path d="M2 9h6M6 7l2 2-2 2" stroke="#1f9a1f" stroke-width="1.4" fill="none"/></svg>
<svg class="b" style="left:1378.0px;top:199.5px" width="14" height="14" viewBox="0 0 16 16"><path d="M3 2h5l3 3v9H3z" stroke="#f0f0f0" stroke-width="1.5" fill="none"/><path d="M8 9h6M12 7l2 2-2 2" stroke="#1f9a1f" stroke-width="1.4" fill="none"/></svg>
<svg class="b" style="left:1378.0px;top:235.0px" width="14" height="14" viewBox="0 0 16 16"><path d="M4 6h6a3 3 0 0 1 0 6H6" stroke="#f0f0f0" stroke-width="1.5" fill="none"/><path d="M6 3L3 6l3 3" stroke="#f0f0f0" stroke-width="1.5" fill="none"/></svg>
<svg class="b" style="left:1378.0px;top:260.5px" width="14" height="14" viewBox="0 0 16 16"><path d="M12 6H6a3 3 0 0 0 0 6h4" stroke="#f0f0f0" stroke-width="1.5" fill="none"/><path d="M10 3l3 3-3 3" stroke="#f0f0f0" stroke-width="1.5" fill="none"/></svg>
<svg class="b" style="left:1378.0px;top:297.0px" width="14" height="14" viewBox="0 0 16 16"><rect x="2" y="2" width="8" height="8" fill="#f0f0f0"/><rect x="5" y="5" width="9" height="9" fill="#f0f0f0" stroke="#333" stroke-width="1"/></svg>
<svg class="b" style="left:1378.0px;top:322.5px" width="14" height="14" viewBox="0 0 16 16"><circle cx="4.5" cy="12" r="2.2" stroke="#f0f0f0" stroke-width="1.5" fill="none"/><circle cx="11.5" cy="12" r="2.2" stroke="#f0f0f0" stroke-width="1.5" fill="none"/><path d="M5.5 10L11 2M10.5 10L5 2" stroke="#f0f0f0" stroke-width="1.5"/></svg>
<svg class="b" style="left:1378.0px;top:347.5px" width="14" height="14" viewBox="0 0 16 16"><path d="M3 3h7v11H3z" fill="#f0f0f0"/><path d="M10 4h3v10h-3" stroke="#f0f0f0" stroke-width="1.5" fill="none"/></svg>
<svg class="b" style="left:1378.0px;top:494.0px" width="14" height="14" viewBox="0 0 16 16"><rect x="2" y="2" width="8" height="8" fill="#f0f0f0"/><rect x="6" y="6" width="8" height="8" fill="#1f9a1f"/></svg>
<svg class="b" style="left:1378.0px;top:520.5px" width="14" height="14" viewBox="0 0 16 16"><rect x="2" y="2" width="8" height="8" fill="#f0f0f0"/><rect x="6" y="6" width="8" height="8" fill="#f0f0f0" stroke="#333"/><rect x="8" y="8" width="4" height="4" fill="#333"/></svg>
<svg class="b" style="left:1378.0px;top:546.0px" width="14" height="14" viewBox="0 0 16 16"><rect x="2" y="2" width="8" height="8" fill="#f0f0f0"/><rect x="6" y="6" width="8" height="8" fill="#f0f0f0" stroke="#333"/><path d="M9 13l2-4" stroke="#333" stroke-width="1.3"/></svg>
<svg class="b" style="left:1378.0px;top:582.0px" width="14" height="14" viewBox="0 0 16 16"><circle cx="8" cy="8" r="4" fill="#f0f0f0"/><rect x="1" y="1" width="3" height="3" fill="#1f9a1f"/><rect x="12" y="12" width="3" height="3" fill="#1f9a1f"/><rect x="12" y="1" width="2" height="2" fill="#1f9a1f"/><rect x="1" y="12" width="2" height="2" fill="#1f9a1f"/></svg>
<svg class="b" style="left:1378.0px;top:607.5px" width="14" height="14" viewBox="0 0 16 16"><circle cx="8" cy="8" r="4" fill="#f0f0f0"/><path d="M2 2l3 3M14 2l-3 3M2 14l3-3M14 14l-3-3" stroke="#f0f0f0" stroke-width="1.4"/></svg>
<svg class="b" style="left:1378.0px;top:644.0px" width="14" height="14" viewBox="0 0 16 16"><path d="M5 3l6 5-6 5z" fill="#f0f0f0"/></svg>
<svg class="b" style="left:25px;top:680px;" width="1320" height="11" viewBox="0 0 1320 11"><rect x="0.70" y="0" width="11.6" height="11" fill="#000000"/><rect x="13.11" y="0" width="11.6" height="11" fill="#1a1a1a"/><rect x="25.52" y="0" width="11.6" height="11" fill="#333333"/><rect x="37.93" y="0" width="11.6" height="11" fill="#4d4d4d"/><rect x="50.34" y="0" width="11.6" height="11" fill="#666666"/><rect x="62.75" y="0" width="11.6" height="11" fill="#808080"/><rect x="75.16" y="0" width="11.6" height="11" fill="#999999"/><rect x="87.57" y="0" width="11.6" height="11" fill="#b3b3b3"/><rect x="99.98" y="0" width="11.6" height="11" fill="#cccccc"/><rect x="112.39" y="0" width="11.6" height="11" fill="#e6e6e6"/><rect x="124.80" y="0" width="11.6" height="11" fill="#ececec"/><rect x="137.21" y="0" width="11.6" height="11" fill="#f2f2f2"/><rect x="149.62" y="0" width="11.6" height="11" fill="#f9f9f9"/><rect x="162.03" y="0" width="11.6" height="11" fill="#ffffff"/><rect x="174.44" y="0" width="11.6" height="11" fill="#800000"/><rect x="186.85" y="0" width="11.6" height="11" fill="#ff0000"/><rect x="199.26" y="0" width="11.6" height="11" fill="#808000"/><rect x="211.67" y="0" width="11.6" height="11" fill="#ffff00"/><rect x="224.08" y="0" width="11.6" height="11" fill="#008000"/><rect x="236.49" y="0" width="11.6" height="11" fill="#00ff00"/><rect x="248.90" y="0" width="11.6" height="11" fill="#008080"/><rect x="261.31" y="0" width="11.6" height="11" fill="#00ffff"/><rect x="273.72" y="0" width="11.6" height="11" fill="#000080"/><rect x="286.13" y="0" width="11.6" height="11" fill="#0000ff"/><rect x="298.54" y="0" width="11.6" height="11" fill="#800080"/><rect x="310.95" y="0" width="11.6" height="11" fill="#ff00ff"/><rect x="323.36" y="0" width="11.6" height="11" fill="#2b0000"/><rect x="335.77" y="0" width="11.6" height="11" fill="#550000"/><rect x="348.18" y="0" width="11.6" height="11" fill="#800000"/><rect x="360.59" y="0" width="11.6" height="11" fill="#aa0000"/><rect x="373.00" y="0" width="11.6" height="11" fill="#d40000"/><rect x="385.41" y="0" width="11.6" height="11" fill="#ff0000"/><rect x="397.82" y="0" width="11.6" height="11" fill="#ff2a2a"/><rect x="410.23" y="0" width="11.6" height="11" fill="#ff5555"/><rect x="422.64" y="0" width="11.6" height="11" fill="#ff8080"/><rect x="435.05" y="0" width="11.6" height="11" fill="#ffaaaa"/><rect x="447.46" y="0" width="11.6" height="11" fill="#ffd5d5"/><rect x="459.87" y="0" width="11.6" height="11" fill="#280b0b"/><rect x="472.28" y="0" width="11.6" height="11" fill="#501616"/><rect x="484.69" y="0" width="11.6" height="11" fill="#782121"/><rect x="497.10" y="0" width="11.6" height="11" fill="#a02c2c"/><rect x="509.51" y="0" width="11.6" height="11" fill="#c83737"/><rect x="521.92" y="0" width="11.6" height="11" fill="#d35f5f"/><rect x="534.33" y="0" width="11.6" height="11" fill="#de8787"/><rect x="546.74" y="0" width="11.6" height="11" fill="#e9afaf"/><rect x="559.15" y="0" width="11.6" height="11" fill="#f4d7d7"/><rect x="571.56" y="0" width="11.6" height="11" fill="#241c1c"/><rect x="583.97" y="0" width="11.6" height="11" fill="#483737"/><rect x="596.38" y="0" width="11.6" height="11" fill="#6c5353"/><rect x="608.79" y="0" width="11.6" height="11" fill="#916f6f"/><rect x="621.20" y="0" width="11.6" height="11" fill="#ac9393"/><rect x="633.61" y="0" width="11.6" height="11" fill="#c8b7b7"/><rect x="646.02" y="0" width="11.6" height="11" fill="#e3dbdb"/><rect x="658.43" y="0" width="11.6" height="11" fill="#2b1100"/><rect x="670.84" y="0" width="11.6" height="11" fill="#552200"/><rect x="683.25" y="0" width="11.6" height="11" fill="#803300"/><rect x="695.66" y="0" width="11.6" height="11" fill="#aa4400"/><rect x="708.07" y="0" width="11.6" height="11" fill="#d45500"/><rect x="720.48" y="0" width="11.6" height="11" fill="#ff6600"/><rect x="732.89" y="0" width="11.6" height="11" fill="#ff7f2a"/><rect x="745.30" y="0" width="11.6" height="11" fill="#ff9955"/><rect x="757.71" y="0" width="11.6" height="11" fill="#ffb380"/><rect x="770.12" y="0" width="11.6" height="11" fill="#ffccaa"/><rect x="782.53" y="0" width="11.6" height="11" fill="#ffe6d5"/><rect x="794.94" y="0" width="11.6" height="11" fill="#28170b"/><rect x="807.35" y="0" width="11.6" height="11" fill="#502d16"/><rect x="819.76" y="0" width="11.6" height="11" fill="#784421"/><rect x="832.17" y="0" width="11.6" height="11" fill="#a05a2c"/><rect x="844.58" y="0" width="11.6" height="11" fill="#c87137"/><rect x="856.99" y="0" width="11.6" height="11" fill="#d38d5f"/><rect x="869.40" y="0" width="11.6" height="11" fill="#deaa87"/><rect x="881.81" y="0" width="11.6" height="11" fill="#e9c6af"/><rect x="894.22" y="0" width="11.6" height="11" fill="#f4e3d7"/><rect x="906.63" y="0" width="11.6" height="11" fill="#241f1c"/><rect x="919.04" y="0" width="11.6" height="11" fill="#483e37"/><rect x="931.45" y="0" width="11.6" height="11" fill="#6c5d53"/><rect x="943.86" y="0" width="11.6" height="11" fill="#917c6f"/><rect x="956.27" y="0" width="11.6" height="11" fill="#ac9d93"/><rect x="968.68" y="0" width="11.6" height="11" fill="#c8beb7"/><rect x="981.09" y="0" width="11.6" height="11" fill="#e3dedb"/><rect x="993.50" y="0" width="11.6" height="11" fill="#2b2200"/><rect x="1005.91" y="0" width="11.6" height="11" fill="#554400"/><rect x="1018.32" y="0" width="11.6" height="11" fill="#806600"/><rect x="1030.73" y="0" width="11.6" height="11" fill="#aa8800"/><rect x="1043.14" y="0" width="11.6" height="11" fill="#d4aa00"/><rect x="1055.55" y="0" width="11.6" height="11" fill="#ffcc00"/><rect x="1067.96" y="0" width="11.6" height="11" fill="#ffd42a"/><rect x="1080.37" y="0" width="11.6" height="11" fill="#ffdd55"/><rect x="1092.78" y="0" width="11.6" height="11" fill="#ffe680"/><rect x="1105.19" y="0" width="11.6" height="11" fill="#ffeeaa"/><rect x="1117.60" y="0" width="11.6" height="11" fill="#fff6d5"/><rect x="1130.01" y="0" width="11.6" height="11" fill="#28220b"/><rect x="1142.42" y="0" width="11.6" height="11" fill="#504416"/><rect x="1154.83" y="0" width="11.6" height="11" fill="#786721"/><rect x="1167.24" y="0" width="11.6" height="11" fill="#a0892c"/><rect x="1179.65" y="0" width="11.6" height="11" fill="#c8ab37"/><rect x="1192.06" y="0" width="11.6" height="11" fill="#d3bc5f"/><rect x="1204.47" y="0" width="11.6" height="11" fill="#decd87"/><rect x="1216.88" y="0" width="11.6" height="11" fill="#e9ddaf"/><rect x="1229.29" y="0" width="11.6" height="11" fill="#f4eed7"/><rect x="1241.70" y="0" width="11.6" height="11" fill="#24221c"/><rect x="1254.11" y="0" width="11.6" height="11" fill="#484537"/><rect x="1266.52" y="0" width="11.6" height="11" fill="#6c6753"/><rect x="1278.93" y="0" width="11.6" height="11" fill="#918a6f"/><rect x="1291.34" y="0" width="11.6" height="11" fill="#aca793"/><rect x="1303.75" y="0" width="11.6" height="11" fill="#c8c4b7"/></svg>
<svg class="b" style="left:1px;top:667px;" width="24" height="24" viewBox="0 0 24 24"><rect width="24" height="24" fill="#fff"/><path d="M2 2L22 22M22 2L2 22" stroke="#c8143c" stroke-width="1.6"/></svg>
<svg class="b" style="left:1344px;top:671px;" width="14" height="10" viewBox="0 0 14 10"><path d="M2 8l5-5 5 5" stroke="#e6e6e6" stroke-width="1.5" fill="none"/></svg>
<svg class="b" style="left:1367px;top:671px;" width="14" height="10" viewBox="0 0 14 10"><path d="M2 3l5 5 5-5" stroke="#e6e6e6" stroke-width="1.5" fill="none"/></svg>
<div class="b" style="left:1386px;top:672px;width:16px;height:18px;border:1px solid #222;border-radius:4px;background:#2e2e2e"></div>
<svg class="b" style="left:1388px;top:676px;" width="10" height="11" viewBox="0 0 10 11"><path d="M0 1.5h10M0 5h10M0 8.5h10" stroke="#f0f0f0" stroke-width="1.5"/></svg>
<div class="t" style="left:3px;top:695.69px;font-size:11px;color:#d6d6d6;font-weight:normal;">Relleno:</div>
<div class="t" style="left:61px;top:695.69px;font-size:11px;color:#d6d6d6;font-weight:normal;">N/D</div>
<div class="t" style="left:14px;top:711.19px;font-size:11px;color:#d6d6d6;font-weight:normal;">Trazo:</div>
<div class="t" style="left:61px;top:711.19px;font-size:11px;color:#d6d6d6;font-weight:normal;">N/D</div>
<div class="t" style="left:120px;top:703.19px;font-size:11px;color:#d6d6d6;font-weight:normal;">O:</div>
<div class="b" style="left:132px;top:693px;width:51px;height:35px;border:1px solid #1f1f1f;border-radius:2.5px;background:#333333"></div>
<div class="t" style="left:138px;top:703.19px;font-size:11px;color:#7e7e7e;font-weight:normal;">100</div>
<div class="b" style="left:160px;top:694px;width:1px;height:26px;background:#2a2a2a;"></div>
<div class="b" style="left:172px;top:694px;width:1px;height:26px;background:#2a2a2a;"></div>
<div class="b" style="left:163px;top:707.5px;width:8px;height:1.5px;background:#5a5a5a;"></div>
<div class="b" style="left:174.5px;top:707.5px;width:8px;height:1.5px;background:#5a5a5a;"></div>
<div class="b" style="left:177.7px;top:704.3px;width:1.5px;height:8px;background:#5a5a5a;"></div>
<div class="b" style="left:195px;top:700px;width:2px;height:15px;background:#3584e4;"></div>
<div class="t" style="left:201.3px;top:703.49px;font-size:11px;color:#dcdcdc;font-weight:normal;transform:scaleX(0.9360);transform-origin:0 0;">Capa 1</div>
<div class="b" style="left:295px;top:696px;width:1px;height:24px;background:#2a2a2a;"></div>
<div class="t" style="left:301.3px;top:703.89px;font-size:11px;color:#d6d6d6;font-weight:normal;transform:scaleX(0.9906);transform-origin:0 0;">No se han seleccionado objetos. Haga clic, Shift+clic, Alt+rueda encima de objetos o arrastre para seleccionar los objetos.</div>
<div class="t" style="left:1155px;top:695.89px;font-size:11px;color:#d6d6d6;font-weight:normal;">X:</div>
<div class="t" style="left:1176px;top:695.89px;font-size:11px;color:#d6d6d6;font-weight:normal;">111.33</div>
<div class="t" style="left:1155px;top:711.49px;font-size:11px;color:#d6d6d6;font-weight:normal;">Y:</div>
<div class="t" style="left:1181px;top:711.49px;font-size:11px;color:#d6d6d6;font-weight:normal;">17.56</div>
<div class="t" style="left:1214.5px;top:702.89px;font-size:11px;color:#d6d6d6;font-weight:normal;">Z:</div>
<div class="b" style="left:1223px;top:693px;width:71px;height:35px;border:1px solid #1f1f1f;border-radius:2.5px;background:#333333"></div>
<div class="t" style="left:1232.5px;top:702.89px;font-size:11px;color:#dcdcdc;font-weight:normal;">71%</div>
<div class="b" style="left:1263.5px;top:694px;width:1px;height:26px;background:#2a2a2a;"></div>
<div class="b" style="left:1278.5px;top:694px;width:1px;height:26px;background:#2a2a2a;"></div>
<div class="b" style="left:1266.5px;top:707.5px;width:9px;height:1.5px;background:#e6e6e6;"></div>
<div class="b" style="left:1281.5px;top:707.5px;width:9px;height:1.5px;background:#e6e6e6;"></div>
<div class="b" style="left:1285.2px;top:703.8px;width:1.5px;height:9px;background:#e6e6e6;"></div>
<div class="b" style="left:1312px;top:693px;width:77px;height:35px;border:1px solid #1f1f1f;border-radius:2.5px;background:#333333"></div>
<div class="t" style="left:1303.5px;top:702.89px;font-size:11px;color:#d6d6d6;font-weight:normal;">R:</div>
<div class="t" style="left:1324px;top:702.89px;font-size:11px;color:#dcdcdc;font-weight:normal;">0.00°</div>
<div class="b" style="left:1373.5px;top:694px;width:1px;height:26px;background:#2a2a2a;"></div>
<div class="b" style="left:1361px;top:707.5px;width:9px;height:1.5px;background:#e6e6e6;"></div>
<div class="b" style="left:1376.5px;top:707.5px;width:9px;height:1.5px;background:#e6e6e6;"></div>
<div class="b" style="left:1380.2px;top:703.8px;width:1.5px;height:9px;background:#e6e6e6;"></div>
<svg class="b" style="left:0;top:0" width="1398" height="720"><rect x="10" y="31" width="1.30" height="1.20" fill="#ececec"/><rect x="13.2" y="31" width="1.30" height="1.20" fill="#ececec"/><rect x="16.2" y="31" width="1.30" height="1.20" fill="#ececec"/><rect x="19.0" y="31" width="2.20" height="1.20" fill="#ececec"/><rect x="10" y="33" width="1.20" height="1.20" fill="#ececec"/><rect x="10" y="37.4" width="1.20" height="1.20" fill="#ececec"/><rect x="10" y="39.8" width="1.20" height="1.20" fill="#ececec"/><rect x="10" y="32.8" width="1.20" height="2.40" fill="#ececec"/><rect x="20.0" y="32.8" width="1.20" height="2.90" fill="#ececec"/><rect x="20.0" y="37.4" width="1.20" height="1.20" fill="#ececec"/><rect x="20.0" y="39.8" width="1.20" height="1.20" fill="#ececec"/><rect x="12.5" y="39.8" width="1.20" height="1.20" fill="#ececec"/><rect x="12.2" y="37.4" width="5.70" height="3.60" fill="#ececec"/><circle cx="17.6" cy="35.8" r="2.6" fill="#ececec"/><rect x="36.8" y="31" width="1.30" height="1.20" fill="#ececec"/><rect x="40.0" y="31" width="1.30" height="1.20" fill="#ececec"/><rect x="43.0" y="31" width="1.30" height="1.20" fill="#ececec"/><rect x="45.8" y="31" width="2.20" height="1.20" fill="#ececec"/><rect x="36.8" y="33" width="1.20" height="1.20" fill="#ececec"/><rect x="36.8" y="37.4" width="1.20" height="1.20" fill="#ececec"/><rect x="36.8" y="39.8" width="1.20" height="1.20" fill="#ececec"/><rect x="36.8" y="32.8" width="1.20" height="2.40" fill="#ececec"/><rect x="46.8" y="32.8" width="1.20" height="2.90" fill="#ececec"/><rect x="46.8" y="37.4" width="1.20" height="1.20" fill="#ececec"/><rect x="46.8" y="39.8" width="1.20" height="1.20" fill="#ececec"/><rect x="39.3" y="39.8" width="1.20" height="1.20" fill="#ececec"/><path d="M39.5 34.2h6.5l1-1.2h-6.5zM39.5 37.1h6.5l1-1.2h-6.5zM39.5 40h6.5l1-1.2h-6.5z" fill="#ececec"/><rect x="63.5" y="31" width="1.30" height="1.20" fill="#6c6c6c"/><rect x="66.7" y="31" width="1.30" height="1.20" fill="#6c6c6c"/><rect x="69.7" y="31" width="1.30" height="1.20" fill="#6c6c6c"/><rect x="72.5" y="31" width="2.20" height="1.20" fill="#6c6c6c"/><rect x="63.5" y="33" width="1.20" height="1.20" fill="#6c6c6c"/><rect x="63.5" y="37.4" width="1.20" height="1.20" fill="#6c6c6c"/><rect x="63.5" y="39.8" width="1.20" height="1.20" fill="#6c6c6c"/><rect x="63.5" y="32.8" width="1.20" height="2.40" fill="#6c6c6c"/><rect x="73.5" y="32.8" width="1.20" height="2.90" fill="#6c6c6c"/><rect x="73.5" y="37.4" width="1.20" height="1.20" fill="#6c6c6c"/><rect x="73.5" y="39.8" width="1.20" height="1.20" fill="#6c6c6c"/><rect x="66.0" y="39.8" width="1.20" height="1.20" fill="#6c6c6c"/><rect x="65.7" y="37.4" width="5.70" height="3.60" fill="#6c6c6c"/><circle cx="71.1" cy="35.8" r="2.6" fill="#6c6c6c"/><rect x="97.8" y="31.5" width="3.70" height="4.50" fill="#ececec"/><line x1="95" y1="34" x2="98.5" y2="34" stroke="#ececec" stroke-width="1.2"/><rect x="92" y="34" width="1.30" height="3.20" fill="#ececec"/><rect x="92" y="38.6" width="1.30" height="1.20" fill="#ececec"/><rect x="92" y="40.6" width="1.30" height="1.20" fill="#ececec"/><rect x="100.2" y="38.6" width="1.30" height="1.20" fill="#ececec"/><rect x="100.2" y="40.6" width="1.30" height="1.20" fill="#ececec"/><line x1="95" y1="41.2" x2="98.5" y2="41.2" stroke="#8a8a8a" stroke-width="1"/><rect x="136.1" y="31.1" width="4.00" height="7.90" fill="#7a7a7a"/><rect x="127.9" y="39" width="8.20" height="3.90" fill="#7a7a7a"/><path d="M134.8 32.3q-3.2 0.6-3.4 4.2" stroke="#1f7a1f" stroke-width="1.4" fill="none"/><path d="M129.6 35.8h3.6l-1.8 2.2z" fill="#1f7a1f"/><rect x="155" y="31.1" width="4.00" height="7.90" fill="#7a7a7a"/><rect x="160.1" y="39" width="7.10" height="3.90" fill="#7a7a7a"/><path d="M160.8 32.3q3.2 0.6 3.4 4.2" stroke="#1f7a1f" stroke-width="1.4" fill="none"/><path d="M162.4 35.8h3.6l-1.8 2.2z" fill="#1f7a1f"/><path d="M187.6 33.9v7.1h-4.8z" fill="#666"/><path d="M189.8 33.9v7.1h4.3z" fill="#7a7a7a"/><path d="M188.6 31.9v9.8" stroke="#8a8a8a" stroke-width="1" stroke-dasharray="2.2 0.9"/><path d="M212 32.7h6.4l2 3.1h-8.4z" fill="#666"/><path d="M212 39h8.4l-2 3.5h-6.4z" fill="#7a7a7a"/><path d="M210 37.6h10.5" stroke="#8a8a8a" stroke-width="1" stroke-dasharray="2.2 0.9"/><rect x="247.1" y="32.0" width="9.80" height="1.90" fill="#8a8a8a"/><rect x="247.1" y="35.0" width="3.80" height="1.00" fill="#5e5e5e"/><rect x="247.1" y="37.9" width="3.80" height="1.00" fill="#5e5e5e"/><rect x="247.1" y="40.9" width="3.80" height="1.00" fill="#5e5e5e"/><path d="M254.5 41.8V36.6" stroke="#1f7a1f" stroke-width="1.3"/><path d="M252.6 37.4l1.9-1.9 1.9 1.9" stroke="#1f7a1f" stroke-width="1.2" fill="none"/><rect x="274.2" y="32" width="3.80" height="1.90" fill="#6a6a6a"/><rect x="274.2" y="34.9" width="9.80" height="1.20" fill="#8a8a8a"/><rect x="274.2" y="37.9" width="3.80" height="1.00" fill="#5e5e5e"/><rect x="274.2" y="40.9" width="3.80" height="1.00" fill="#5e5e5e"/><path d="M281.3 41.8V38.6" stroke="#1f7a1f" stroke-width="1.3"/><path d="M279.40000000000003 39.4l1.9-1.9 1.9 1.9" stroke="#1f7a1f" stroke-width="1.2" fill="none"/><rect x="301.2" y="32" width="3.80" height="1.90" fill="#6a6a6a"/><rect x="301.2" y="35.0" width="3.80" height="1.00" fill="#5e5e5e"/><rect x="301.2" y="37.8" width="9.80" height="1.20" fill="#8a8a8a"/><rect x="301.2" y="40.9" width="3.80" height="1.00" fill="#5e5e5e"/><path d="M308.4 32V35.6" stroke="#1f7a1f" stroke-width="1.3"/><path d="M306.5 34.800000000000004l1.9 1.9 1.9-1.9" stroke="#1f7a1f" stroke-width="1.2" fill="none"/><rect x="328.3" y="32" width="3.80" height="1.90" fill="#6a6a6a"/><rect x="328.3" y="35.0" width="3.80" height="1.00" fill="#5e5e5e"/><rect x="328.3" y="37.9" width="3.80" height="1.00" fill="#5e5e5e"/><rect x="328.3" y="40.8" width="9.80" height="1.20" fill="#8a8a8a"/><path d="M335.4 32V37.8" stroke="#1f7a1f" stroke-width="1.3"/><path d="M333.5 37.0l1.9 1.9 1.9-1.9" stroke="#1f7a1f" stroke-width="1.2" fill="none"/><rect x="703" y="36.1" width="7.00" height="5.90" fill="#ececec"/><path d="M708 36.2v-1.7a2 2 0 0 1 4 0v0.9" stroke="#ececec" stroke-width="1.5" fill="none"/><rect x="897.8" y="39.9" width="1.20" height="1.50" fill="#f4f4f4"/><rect x="900.1" y="39.9" width="1.20" height="1.50" fill="#f4f4f4"/><rect x="902.9" y="40.1" width="2.10" height="1.10" fill="#f4f4f4"/><path d="M904.3 38.9 l2.7 1.8 l-2.7 1.8z" fill="#f4f4f4" transform="translate(0,0)"/><rect x="897.8" y="31.9" width="9.40" height="1.40" fill="#f4f4f4"/><rect x="905.9" y="31.9" width="1.40" height="4.70" fill="#f4f4f4"/><rect x="897.8" y="34.5" width="5.70" height="1.40" fill="#f4f4f4"/><rect x="924.8" y="39.9" width="1.20" height="1.50" fill="#f4f4f4"/><rect x="927.1" y="39.9" width="1.20" height="1.50" fill="#f4f4f4"/><rect x="929.9" y="40.1" width="2.10" height="1.10" fill="#f4f4f4"/><path d="M904.3 38.9 l2.7 1.8 l-2.7 1.8z" fill="#f4f4f4" transform="translate(27,0)"/><path d="M897.8 32.6h6.2q2.8 0.2 3.2 3.6M897.8 35.2h5" stroke="#f4f4f4" stroke-width="1.2" fill="none" transform="translate(27,0)"/><rect x="951.8" y="39.9" width="1.20" height="1.50" fill="#f4f4f4"/><rect x="954.1" y="39.9" width="1.20" height="1.50" fill="#f4f4f4"/><rect x="956.9" y="40.1" width="2.10" height="1.10" fill="#f4f4f4"/><path d="M904.3 38.9 l2.7 1.8 l-2.7 1.8z" fill="#f4f4f4" transform="translate(54,0)"/><rect x="951.8" y="32" width="9.40" height="1.20" fill="#f4f4f4"/><rect x="960" y="32" width="1.20" height="6.00" fill="#f4f4f4"/><defs><linearGradient id="bg3"><stop offset="0" stop-color="#1ea0f0"/><stop offset="1" stop-color="#bfe6ff"/></linearGradient></defs><rect x="951.8" y="34.4" width="7" height="1.5" fill="url(#bg3)"/><rect x="951.8" y="37" width="6.20" height="1.00" fill="#f4f4f4"/><rect x="978.8" y="39.9" width="1.20" height="1.50" fill="#f4f4f4"/><rect x="981.1" y="39.9" width="1.20" height="1.50" fill="#f4f4f4"/><rect x="983.9" y="40.1" width="2.10" height="1.10" fill="#f4f4f4"/><path d="M904.3 38.9 l2.7 1.8 l-2.7 1.8z" fill="#f4f4f4" transform="translate(81,0)"/><rect x="978.8" y="32" width="9.40" height="1.20" fill="#f4f4f4"/><rect x="987" y="32" width="1.20" height="6.00" fill="#f4f4f4"/><rect x="979.3" y="34.6" width="1.20" height="1.00" fill="#3daee9"/><rect x="981.5" y="34.8" width="1.00" height="0.80" fill="#f4f4f4"/><rect x="983.6" y="34.2" width="1.20" height="1.00" fill="#3daee9"/><rect x="978.8" y="37" width="7.20" height="1.00" fill="#f4f4f4"/><path d="M7.6 60.4l8.6 4.4-3.6 1.2 2.8 3.4-1.6 1.2-2.8-3.4-2.4 2.9z" fill="#24508a" stroke="#f4f4f4" stroke-width="1.3" stroke-linejoin="round"/><rect x="7.1" y="83.8" width="4.90" height="4.00" fill="#f2f2f2"/><rect x="8.7" y="85.2" width="1.70" height="1.40" fill="#444"/><path d="M12.6 84.4q1.8-0.9 3.2-1" stroke="#9a9a9a" stroke-width="0.9" fill="none"/><path d="M7.6 88v4" stroke="#777" stroke-width="0.9"/><path d="M13.2 88.8l3.6 1.9-2.5 0.7-0.9 2.3z" fill="#f2f2f2"/><circle cx="10" cy="109.9" r="2.7" fill="none" stroke="#f2f2f2" stroke-width="1.5"/><rect x="11" y="110.6" width="5.2" height="5.6" fill="#1a1a1a" stroke="#f2f2f2" stroke-width="1.5"/><path d="M6.3 179.5l3-2.4 3.2 1.4-0.4 3.8-3.4 2.4-2.6-1.7z" fill="#c0267a" stroke="#f2f2f2" stroke-width="0.8"/><path d="M14.2 179.8l1.1 2.4 2.6 0.3-1.9 1.7 0.5 2.6-2.3-1.3-2.3 1.3 0.5-2.6-1.9-1.7 2.6-0.3z" fill="#8c1c52" stroke="#f2f2f2" stroke-width="1.1" stroke-linejoin="round"/><path d="M12 200.3l5 2.6v5.6l-5 2.6-5-2.6v-5.6z" fill="#f2f2f2"/><path d="M12 201.6l3.8 2-3.8 2-3.8-2z" fill="#6a1c40"/><path d="M8 204.3l3.5 1.9v4l-3.5-1.9z" fill="#e8147f"/><path d="M12.5 206.2l3.5-1.9v4l-3.5 1.9z" fill="#8c1c52"/><path d="M10.5 229.3a1 1 0 1 1 1.6-0.9a2.4 2.4 0 0 1-2.6 2.6a3.2 3.2 0 0 1-3-3.4a3.9 3.9 0 0 1 4.2-3.4q3.4 0.2 4.4 3.6q0.6 2.4-0.3 5" stroke="#f2f2f2" stroke-width="1.4" fill="none"/><circle cx="7.2" cy="248.4" r="1.1" fill="#10a010"/><rect x="6" y="254.5" width="2.3" height="2.3" fill="#10a010"/><path d="M7.2 249.2v5.5" stroke="#10a010" stroke-width="0.9"/><path d="M8 249.8l2-1.6M11 248.6h1.8" stroke="#8a8a8a" stroke-width="0.8"/><path d="M9.8 257.5l1.5-3.6 3.6-2.6 2.4 0.4-0.2 2-3 3.1z" fill="none" stroke="#f2f2f2" stroke-width="1.3" stroke-linejoin="round"/><path d="M7.3 272.2q2.2-0.8 2.6 0.6t-1.8 2q-1.6 0.8 0.2 1.6t0.4 2.4q-1.2 1-1.8 2.6" stroke="#10a010" stroke-width="1.2" fill="none"/><path d="M9.6 279.7l5.6-5.1 1.8 1.7-5.5 5.1-2.6 0.6z" fill="#f2f2f2"/><path d="M15.8 273.4l1.6-1.2 0.3 1.7" fill="#f2f2f2"/><path d="M7.4 295.4q2.4 0.2 2.2 2.3t-2.2 2.2" stroke="#10a010" stroke-width="1.3" fill="none"/><circle cx="7.6" cy="303.2" r="1" fill="#10a010"/><path d="M10.2 302.6l6.4-6.6" stroke="#f2f2f2" stroke-width="1.6"/><text x="5.6" y="326.8" font-size="12" font-weight="bold" fill="#f0f0f0" font-family="Liberation Sans">A</text><rect x="15.6" y="312.6" width="1.40" height="15.60" fill="#14a014"/><defs><radialGradient id="mg"><stop offset="0" stop-color="#9fd8ff"/><stop offset="0.6" stop-color="#1e7fe0"/><stop offset="1" stop-color="#1e7fe0" stop-opacity="0"/></radialGradient></defs><circle cx="12" cy="368.2" r="4.6" fill="url(#mg)"/><path d="M6.6 361.2v14.2M17.6 361.2v14.2M6.6 368.2h11" stroke="#f2f2f2" stroke-width="1.3"/><path d="M9.5 365.5q3-1.5 2.5 2.7t2.6 2.7" stroke="#f2f2f2" stroke-width="1" fill="none"/><path d="M8.2 390.2q1.4 1.8 1.4 2.8a1.4 1.4 0 0 1-2.8 0q0-1 1.4-2.8z" fill="#1a8cff"/><path d="M8.2 399.4l1-2.2 5.6-5.6 1.6 1.6-5.6 5.6z" fill="none" stroke="#f2f2f2" stroke-width="1.1"/><path d="M14.4 390.4l2.2-1.2 1 1-1.2 2.2z" fill="#f2f2f2"/><path d="M8.6 417.6q1.5 1.9 1.5 3a1.5 1.5 0 0 1-3 0q0-1.1 1.5-3z" fill="#1a8cff"/><path d="M10.4 415.2l4.4-3.6 3 3.8-3.6 4.2-3.4-1z" fill="#f2f2f2"/><path d="M11 415.4l6.4 0" stroke="#555" stroke-width="0.8"/><rect x="30.8" y="61.4" width="7.20" height="5.80" fill="#ececec"/><path d="M32.2 61.6v-1.9a2.2 2.2 0 0 1 4.4 0v1.9" stroke="#ececec" stroke-width="1.6" fill="none"/><line x1="1169.6" y1="65.9" x2="1169.6" y2="73.8" stroke="#11a011" stroke-width="1.2"/><line x1="1179.2" y1="65.9" x2="1179.2" y2="73.8" stroke="#11a011" stroke-width="1.2"/><path d="M1171.3 73.2l3.6-5 1.8 2.6z" fill="#11a011"/><circle cx="1176.3" cy="68.3" r="1.2" fill="#11a011"/><path d="M1215.6 74V64.6h8.6" stroke="#f0f0f0" stroke-width="1.1" fill="none"/><path d="M1221 69.8l4.6-4.4" stroke="#f0f0f0" stroke-width="1.8"/><path d="M1216.3 74.6l3-2.9" stroke="#1e8fe0" stroke-width="1.6"/><path d="M1219.5 71.5l1.6-1.6" stroke="#c8c8c8" stroke-width="1.3"/><path d="M1270.7 69.5v-1.4l-2.7-2.8h-5.2v9.1h7.9v-2.4" stroke="#f0f0f0" stroke-width="1.3" fill="none"/><path d="M1267 70.4h6" stroke="#11a011" stroke-width="1.2"/><path d="M1272.2 68.8l2 1.6-2 1.6z" fill="#11a011"/><path d="M1309.6 75.3l1.5-2.6q2-3.3 6-5.2M1312.4 70.6l-1.6-2.2M1314.6 69.2l-0.4-2.4M1312.6 72.4l3.4 0.1M1315.5 70.3l3 0.4" stroke="#f0f0f0" stroke-width="1.2" fill="none"/><circle cx="1319.2" cy="66.6" r="1.1" fill="#f0f0f0"/><circle cx="1310" cy="74.6" r="1.1" fill="#f0f0f0"/><rect x="1130" y="91" width="9.00" height="9.00" fill="#8a8a8a"/><rect x="1130" y="91" width="2.40" height="2.40" fill="#f4f4f4"/><rect x="1130" y="94.3" width="2.40" height="2.40" fill="#f4f4f4"/><rect x="1130" y="97.6" width="2.40" height="2.40" fill="#f4f4f4"/><rect x="1133.3" y="91" width="2.40" height="2.40" fill="#f4f4f4"/><rect x="1133.3" y="94.3" width="2.40" height="2.40" fill="#f4f4f4"/><rect x="1133.3" y="97.6" width="2.40" height="2.40" fill="#f4f4f4"/><rect x="1136.6" y="91" width="2.40" height="2.40" fill="#f4f4f4"/><rect x="1136.6" y="94.3" width="2.40" height="2.40" fill="#f4f4f4"/><rect x="1136.6" y="97.6" width="2.40" height="2.40" fill="#f4f4f4"/><circle cx="1194.9" cy="95.4" r="3.6" fill="none" stroke="#f4f4f4" stroke-width="2.2" stroke-dasharray="2.2 0.6"/><rect x="1073.9" y="132.8" width="6.30" height="6.10" fill="#ececec"/><rect x="1072" y="131.2" width="3.50" height="1.20" fill="#10a010"/><rect x="1072" y="131.2" width="1.20" height="3.60" fill="#10a010"/><rect x="1077" y="131.2" width="1.10" height="1.10" fill="#10a010"/><rect x="1079" y="131.2" width="1.10" height="1.10" fill="#10a010"/><rect x="1081" y="131.2" width="1.10" height="1.10" fill="#10a010"/><rect x="1072" y="136" width="1.10" height="1.10" fill="#10a010"/><rect x="1072" y="138" width="1.10" height="1.10" fill="#10a010"/><rect x="1072" y="140" width="1.10" height="1.10" fill="#10a010"/><rect x="1072" y="156.4" width="1.80" height="1.80" fill="#10a010"/><rect x="1081" y="156.4" width="1.00" height="2.00" fill="#10a010"/><rect x="1072" y="165" width="1.80" height="1.00" fill="#10a010"/><rect x="1081" y="165" width="1.00" height="1.00" fill="#10a010"/><rect x="1074" y="157.7" width="5.00" height="1.30" fill="#f0f0f0"/><rect x="1077" y="160.3" width="4.00" height="1.60" fill="#f0f0f0"/><rect x="1074" y="163.1" width="6.00" height="1.70" fill="#f0f0f0"/><rect x="1072" y="207" width="7.50" height="1.70" fill="#f0f0f0"/><rect x="1072.5" y="210.2" width="7.00" height="1.70" fill="#f0f0f0"/><rect x="1072" y="213.2" width="7.50" height="1.70" fill="#f0f0f0"/><rect x="1081.2" y="206.5" width="0.80" height="1.10" fill="#19a019"/><line x1="1097.5" y1="206" x2="1097.5" y2="217" stroke="#19a019" stroke-width="1"/><rect x="1098.7" y="207" width="6.50" height="1.70" fill="#f0f0f0"/><rect x="1098.7" y="210.2" width="5.80" height="1.70" fill="#f0f0f0"/><rect x="1098.7" y="213.2" width="6.50" height="1.70" fill="#f0f0f0"/><rect x="1123" y="207" width="3.20" height="1.70" fill="#f0f0f0"/><rect x="1124" y="210.2" width="2.20" height="1.70" fill="#f0f0f0"/><rect x="1123" y="213.2" width="3.20" height="1.70" fill="#f0f0f0"/><rect x="1128.2" y="207" width="3.80" height="1.70" fill="#f0f0f0"/><rect x="1128.2" y="210.2" width="2.80" height="1.70" fill="#f0f0f0"/><rect x="1128.2" y="213.2" width="3.80" height="1.70" fill="#f0f0f0"/><line x1="1127.4" y1="206" x2="1127.4" y2="217" stroke="#19a019" stroke-width="1"/><rect x="1149.2" y="207" width="5.80" height="1.70" fill="#f0f0f0"/><rect x="1150" y="210.2" width="5.00" height="1.70" fill="#f0f0f0"/><rect x="1149.2" y="213.2" width="5.80" height="1.70" fill="#f0f0f0"/><line x1="1156.7" y1="206" x2="1156.7" y2="217" stroke="#19a019" stroke-width="1"/><rect x="1175" y="207" width="7.00" height="1.70" fill="#f0f0f0"/><rect x="1176" y="210.2" width="6.00" height="1.70" fill="#f0f0f0"/><rect x="1175" y="213.2" width="7.00" height="1.70" fill="#f0f0f0"/><rect x="1172" y="206.5" width="0.80" height="1.10" fill="#19a019"/><path d="M1198 216.5 L1199 207 Q1199.5 205.5 1201 206 L1203 206.5 L1202.5 212 L1200 213 Z" fill="none" stroke="#e0e0e0" stroke-width="1"/><line x1="1198.5" y1="206" x2="1198.5" y2="216.5" stroke="#19a019" stroke-width="1"/><rect x="1073.5" y="233.5" width="1.80" height="4.50" fill="#f0f0f0"/><rect x="1076.8" y="235" width="1.80" height="3.00" fill="#f0f0f0"/><rect x="1080.2" y="232" width="1.80" height="6.00" fill="#f0f0f0"/><line x1="1072" y1="238.5" x2="1083" y2="238.5" stroke="#19a019" stroke-width="1"/><line x1="1096" y1="231.5" x2="1108" y2="231.5" stroke="#19a019" stroke-width="1"/><path d="M1098.7 233.3h8.6v5.3h-3l-1 1h-4.6z" fill="#f0f0f0"/><rect x="1123" y="232" width="3.50" height="3.50" fill="#f0f0f0"/><rect x="1127.5" y="232" width="3.50" height="3.50" fill="#f0f0f0"/><rect x="1123" y="237.5" width="3.50" height="3.50" fill="#f0f0f0"/><rect x="1127.5" y="237.5" width="3.50" height="3.50" fill="#f0f0f0"/><line x1="1120.7" y1="236.5" x2="1133" y2="236.5" stroke="#19a019" stroke-width="1.2"/><path d="M1147 234h3l1 1h4v5.2h-8z" fill="#f0f0f0"/><line x1="1171.2" y1="233.5" x2="1182" y2="233.5" stroke="#19a019" stroke-width="1.2"/><rect x="1173" y="235" width="2.30" height="6.00" fill="#f0f0f0"/><rect x="1176.5" y="235" width="1.80" height="6.00" fill="#f0f0f0"/><rect x="1179.5" y="235" width="2.30" height="6.00" fill="#f0f0f0"/><text x="1196" y="239" font-size="9" fill="#e8e8e8" font-family="Liberation Serif" font-style="italic">ya</text><line x1="1073.5" y1="278.8" x2="1073.5" y2="282.6" stroke="#19a019" stroke-width="1.2"/><line x1="1078.7" y1="278.8" x2="1078.7" y2="282.6" stroke="#19a019" stroke-width="1.2"/><rect x="1073" y="284.2" width="3.70" height="5.70" fill="#f0f0f0"/><rect x="1078" y="284.2" width="4.10" height="3.80" fill="#f0f0f0"/><line x1="1099.5" y1="278.8" x2="1099.5" y2="282.6" stroke="#19a019" stroke-width="1.2"/><line x1="1104.4" y1="278.8" x2="1104.4" y2="282.6" stroke="#19a019" stroke-width="1.2"/><rect x="1098" y="284.2" width="2.90" height="5.70" fill="#f0f0f0"/><rect x="1103" y="284.2" width="4.10" height="3.80" fill="#f0f0f0"/><rect x="1122.9" y="284.2" width="3.00" height="3.80" fill="#f0f0f0"/><rect x="1128" y="284.2" width="3.10" height="5.70" fill="#f0f0f0"/><path d="M1146.5 280v1.5h3v-1.5M1152 280v1.5h3v-1.5" stroke="#19a019" stroke-width="1.1" fill="none"/><rect x="1146" y="284.2" width="2.20" height="5.70" fill="#f0f0f0"/><rect x="1150.2" y="284.2" width="2.70" height="3.80" fill="#f0f0f0"/><rect x="1155" y="284.2" width="3.00" height="5.70" fill="#f0f0f0"/><line x1="1172" y1="281.3" x2="1178.1" y2="281.3" stroke="#19a019" stroke-width="1.1"/><line x1="1177.5" y1="279.5" x2="1177.5" y2="283" stroke="#19a019" stroke-width="1"/><text x="1172" y="288" font-size="6" fill="#e0e0e0" font-family="Liberation Sans" font-weight="bold">a</text><text x="1176" y="289" font-size="9.5" fill="#c8c8c8" font-family="Liberation Serif" font-style="italic">y</text><rect x="1075.9" y="306" width="6.20" height="2.90" fill="#f0f0f0"/><rect x="1075.9" y="311" width="4.10" height="2.90" fill="#f0f0f0"/><line x1="1096" y1="307.5" x2="1099.8" y2="307.5" stroke="#19a019" stroke-width="1.1"/><line x1="1096" y1="312.3" x2="1099.8" y2="312.3" stroke="#19a019" stroke-width="1.1"/><rect x="1101.2" y="306" width="5.80" height="2.90" fill="#f0f0f0"/><rect x="1101.2" y="311" width="3.60" height="2.90" fill="#f0f0f0"/><line x1="1121" y1="308.5" x2="1124.8" y2="308.5" stroke="#19a019" stroke-width="1.1"/><rect x="1126" y="306" width="4.20" height="2.90" fill="#f0f0f0"/><rect x="1125.9" y="311" width="6.10" height="2.90" fill="#f0f0f0"/><path d="M1147.3 306v3M1147.3 311v3" stroke="#19a019" stroke-width="1.1"/><rect x="1149.9" y="304" width="7.10" height="2.00" fill="#f0f0f0"/><rect x="1149.9" y="308.1" width="5.10" height="2.60" fill="#f0f0f0"/><rect x="1149.9" y="313.9" width="7.10" height="1.90" fill="#f0f0f0"/><line x1="1172" y1="308" x2="1172" y2="315" stroke="#19a019" stroke-width="1.1"/><line x1="1171" y1="314.8" x2="1174.5" y2="314.8" stroke="#19a019" stroke-width="1.1"/><text x="1175" y="310" font-size="6.5" fill="#e0e0e0" font-family="Liberation Sans">a</text><text x="1175" y="315.5" font-size="9" fill="#d0d0d0" font-family="Liberation Serif" font-style="italic">y</text><path d="M1072.5 355.5l2.5-2 3 1 2.5 0.5-0.5 3.5 2 2.5-1.5 2-2.5-1-3 0.5-1-3z" fill="none" stroke="#f0f0f0" stroke-width="1.2" stroke-dasharray="1.6 1.2"/><rect x="1098.2" y="354.1" width="2.70" height="2.70" fill="#f0f0f0"/><rect x="1104.1" y="360" width="3.00" height="3.00" fill="#f0f0f0"/><path d="M1101.5 355l5 4" stroke="#f0f0f0" stroke-width="1.6" stroke-dasharray="1.5 0.8"/><path d="M1099 359l1.5 1.5-1 1 1.5 2.5-2.5-2 1-1z" fill="#3daee9"/><rect x="1122.9" y="354.1" width="2.60" height="2.70" fill="#f0f0f0"/><rect x="1123.5" y="358" width="3.50" height="1.00" fill="#3daee9"/><rect x="1123.5" y="361" width="3.50" height="1.70" fill="#3daee9"/><rect x="1128" y="360" width="4.00" height="3.00" fill="#f0f0f0"/><path d="M1127.5 355.5q3 0 3.5 3" stroke="#f0f0f0" stroke-width="1.2" fill="none"/><rect x="1147" y="354.1" width="3.80" height="2.70" fill="#f0f0f0"/><circle cx="1150" cy="361.5" r="2.3" fill="none" stroke="#3daee9" stroke-width="1" stroke-dasharray="1.2 0.8"/><rect x="1153.3" y="360" width="3.70" height="3.00" fill="#f0f0f0"/><path d="M1152 355.5q3 0 3.5 3" stroke="#f0f0f0" stroke-width="1.2" fill="none"/><rect x="1173.5" y="353.7" width="2.40" height="2.00" fill="#f0f0f0"/><rect x="1177.2" y="353.7" width="2.40" height="2.00" fill="#f0f0f0"/><rect x="1172" y="356.5" width="2.40" height="2.00" fill="#f0f0f0"/><rect x="1175.3" y="356.5" width="2.40" height="2.00" fill="#f0f0f0"/><rect x="1178.5" y="356.5" width="2.40" height="2.00" fill="#f0f0f0"/><rect x="1172" y="359.5" width="2.40" height="2.00" fill="#f0f0f0"/><rect x="1175.3" y="359.5" width="2.40" height="2.00" fill="#f0f0f0"/><rect x="1178.5" y="359.5" width="2.40" height="2.00" fill="#f0f0f0"/><rect x="1175.3" y="362.3" width="2.40" height="2.00" fill="#f0f0f0"/><rect x="1196" y="358" width="3.00" height="2.00" fill="#f0f0f0"/><rect x="1204" y="353.5" width="3.00" height="2.00" fill="#f0f0f0"/><rect x="1204" y="361.5" width="3.00" height="2.00" fill="#f0f0f0"/><path d="M1199.5 358.5l2.5-3M1199.5 359.5l2.5 2.5M1204 358v1.5" stroke="#d0d0d0" stroke-width="0.9" fill="none"/><circle cx="1385.2" cy="389.3" r="4.7" fill="#f0f0f0"/><path d="M1388.6 392.8l2 2.4" stroke="#f0f0f0" stroke-width="1.6"/><rect x="1382.6" y="390.2" width="1.2" height="1.2" fill="#333"/><rect x="1384.8" y="390.2" width="1.2" height="1.2" fill="#333"/><circle cx="1385.2" cy="414.8" r="4.1" fill="none" stroke="#f0f0f0" stroke-width="1.4"/><path d="M1388.3 418.2l2 2.4" stroke="#f0f0f0" stroke-width="1.6"/><rect x="1382.6" y="412.4" width="2.6" height="2.6" fill="#f0f0f0"/><rect x="1384.6" y="414.2" width="2.6" height="3.4" fill="#f0f0f0" stroke="#333" stroke-width="0.6"/><circle cx="1385.2" cy="440.5" r="4.1" fill="none" stroke="#f0f0f0" stroke-width="1.4"/><path d="M1388.3 443.9l2 2.4" stroke="#f0f0f0" stroke-width="1.6"/><rect x="1383.2" y="437.9" width="3.8" height="5.4" fill="#ddd"/><path d="M1380.5 465.5v-2.8h2.4M1387.6 462.7h2.4v5.6M1380.5 469.2v0.8h0.8M1389.2 470h0.8" stroke="#f0f0f0" stroke-width="1" fill="none"/><path d="M1383.6 466.4h3.6M1385 464.8l-1.6 1.6 1.6 1.6" stroke="#f0f0f0" stroke-width="1" fill="none"/><ellipse cx="255.5" cy="709.4" rx="4.6" ry="3.1" fill="none" stroke="#f0f0f0" stroke-width="2"/><rect x="254.6" y="708.6" width="1.9" height="1.6" fill="#f0f0f0"/><path d="M251.2 704.3l1.3 1.8M255.5 703v2.4M259.8 704.3l-1.3 1.8" stroke="#f0f0f0" stroke-width="1.3"/><rect x="278" y="706.9" width="7.00" height="6.10" fill="#f0f0f0"/><path d="M283.3 707v-1.6a2 2 0 0 1 4 0v0.8" stroke="#f0f0f0" stroke-width="1.4" fill="none"/></svg>
</body></html>
